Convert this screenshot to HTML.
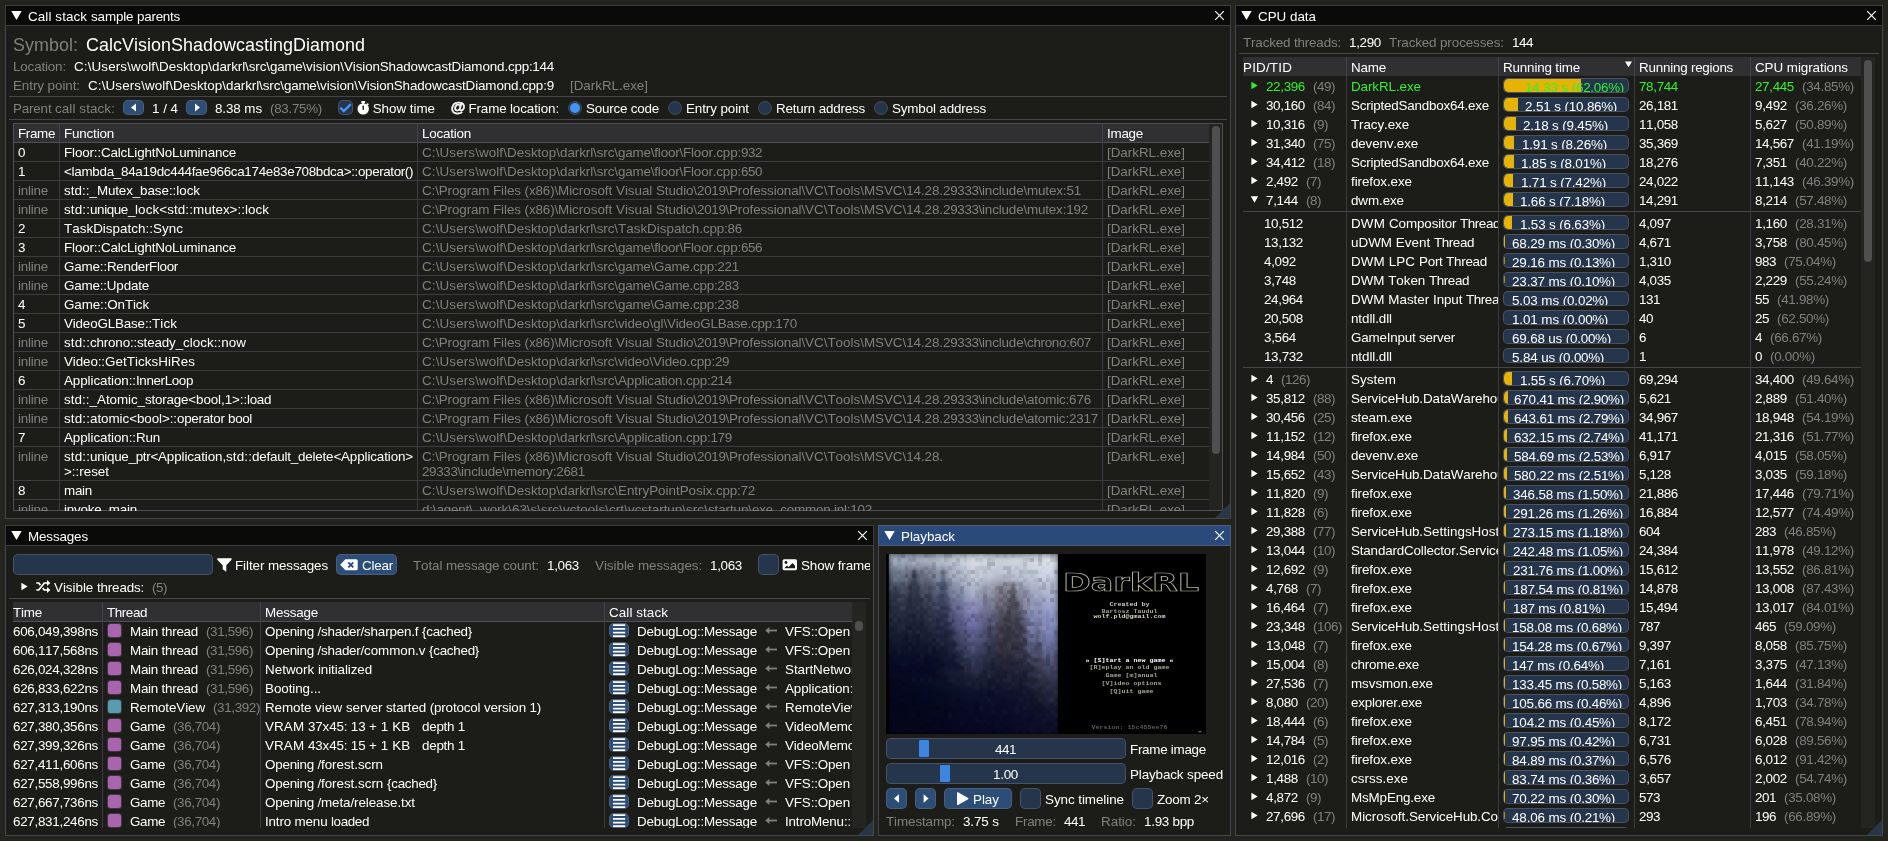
<!DOCTYPE html><html><head><meta charset="utf-8"><title>Tracy Profiler</title><style>
html,body{margin:0;padding:0}
body{width:1888px;height:841px;overflow:hidden;background:#24241f;position:relative;font-family:"Liberation Sans",sans-serif;font-kerning:none;color:#fff;font-size:13.4266px}
#bg,#fg{position:absolute;left:0;top:0;width:1888px;height:841px;overflow:hidden}
#fg{will-change:transform}
.r{position:absolute;display:block}
.c{position:absolute;overflow:hidden}
.t{position:absolute;white-space:pre;line-height:15px;height:15px;font-size:13.4266px;color:#fff}
.B{font-size:17.9021px;line-height:20px;height:20px}
.d{color:#808080}
.g{color:#33f033}
</style></head><body><div id="bg"><div class="r" style="left:5px;top:5px;width:1226px;height:514px;background:#1c1c18;"></div><div class="r" style="left:5px;top:5px;width:1226px;height:21px;background:#0a0a09;"></div><div class="r" style="left:6px;top:25px;width:1224px;height:1px;background:rgba(110,110,128,.5);"></div><svg class="r" style="left:5px;top:5px;" width="1226" height="21" viewBox="0 0 1226 21"><polygon points="6.30,6.00 16.70,6.00 11.50,15.00" fill="#fff"/><path d="M1210.20 6.20L1218.80 14.80M1218.80 6.20L1210.20 14.80" stroke="#fff" stroke-width="1.15" fill="none"/></svg><div class="r" style="left:9px;top:96px;width:1218px;height:1px;background:rgba(110,110,128,.5);"></div><div class="r" style="left:123px;top:100px;width:21px;height:15px;background:#2b4d76;border-radius:5px;box-shadow:inset 0 0 0 1px rgba(110,110,128,.5)"></div><svg class="r" style="left:123px;top:100px;" width="21" height="15" viewBox="0 0 21 15"><polygon points="13,3.5 13,11.5 8,7.5" fill="#fff"/></svg><div class="r" style="left:186px;top:100px;width:21px;height:15px;background:#2b4d76;border-radius:5px;box-shadow:inset 0 0 0 1px rgba(110,110,128,.5)"></div><svg class="r" style="left:186px;top:100px;" width="21" height="15" viewBox="0 0 21 15"><polygon points="9,3.5 9,11.5 14,7.5" fill="#fff"/></svg><div class="r" style="left:338px;top:100px;width:15px;height:15px;background:#24354c;border-radius:5px;box-shadow:inset 0 0 0 1px rgba(110,110,128,.5)"></div><svg class="r" style="left:338px;top:100px;" width="15" height="15" viewBox="0 0 15 15"><path d="M2.3 7.6L5.8 11.1L12.8 4.1" stroke="#4296fa" stroke-width="2.2" fill="none"/></svg><svg class="r" style="left:357px;top:100px;" width="13" height="15" viewBox="0 0 13 15"><circle cx="6.2" cy="8.9" r="5.7" fill="#fff"/><rect x="4.2" y="0.9" width="4" height="2" rx=".6" fill="#fff"/><rect x="5.4" y="2" width="1.7" height="2" fill="#fff"/><rect x="5.5" y="5.6" width="1.5" height="4.2" rx=".6" fill="#1c1c18"/><path d="M10 3.6l1.3 1.3" stroke="#fff" stroke-width="1.6"/></svg><svg class="r" style="left:567px;top:100px;" width="16" height="16" viewBox="0 0 16 16"><circle cx="8" cy="8" r="6.5" fill="#24354c" stroke="rgba(110,110,128,.5)" stroke-width="1"/><circle cx="8" cy="8" r="5" fill="#4296fa"/></svg><svg class="r" style="left:667px;top:100px;" width="16" height="16" viewBox="0 0 16 16"><circle cx="8" cy="8" r="6.5" fill="#24354c" stroke="rgba(110,110,128,.5)" stroke-width="1"/></svg><svg class="r" style="left:757px;top:100px;" width="16" height="16" viewBox="0 0 16 16"><circle cx="8" cy="8" r="6.5" fill="#24354c" stroke="rgba(110,110,128,.5)" stroke-width="1"/></svg><svg class="r" style="left:873px;top:100px;" width="16" height="16" viewBox="0 0 16 16"><circle cx="8" cy="8" r="6.5" fill="#24354c" stroke="rgba(110,110,128,.5)" stroke-width="1"/></svg><div class="r" style="left:9px;top:119px;width:1218px;height:1px;background:rgba(110,110,128,.5);"></div><div class="c" style="left:13px;top:123px;width:1210px;height:388px;"><div class="r" style="left:0px;top:0px;width:1196px;height:19px;background:#303033;"></div><div class="r" style="left:1196px;top:0px;width:14px;height:388px;background:#242420;"></div><div class="r" style="left:1199px;top:3px;width:8px;height:328px;background:#4f4f4f;border-radius:4px"></div><div class="r" style="left:0px;top:19px;width:1196px;height:1px;background:#4f4f59;"></div><div class="r" style="left:0px;top:38px;width:1196px;height:1px;background:#3b3b42;"></div><div class="r" style="left:0px;top:57px;width:1196px;height:1px;background:#3b3b42;"></div><div class="r" style="left:0px;top:76px;width:1196px;height:1px;background:#3b3b42;"></div><div class="r" style="left:0px;top:95px;width:1196px;height:1px;background:#3b3b42;"></div><div class="r" style="left:0px;top:114px;width:1196px;height:1px;background:#3b3b42;"></div><div class="r" style="left:0px;top:133px;width:1196px;height:1px;background:#3b3b42;"></div><div class="r" style="left:0px;top:152px;width:1196px;height:1px;background:#3b3b42;"></div><div class="r" style="left:0px;top:171px;width:1196px;height:1px;background:#3b3b42;"></div><div class="r" style="left:0px;top:190px;width:1196px;height:1px;background:#3b3b42;"></div><div class="r" style="left:0px;top:209px;width:1196px;height:1px;background:#3b3b42;"></div><div class="r" style="left:0px;top:228px;width:1196px;height:1px;background:#3b3b42;"></div><div class="r" style="left:0px;top:247px;width:1196px;height:1px;background:#3b3b42;"></div><div class="r" style="left:0px;top:266px;width:1196px;height:1px;background:#3b3b42;"></div><div class="r" style="left:0px;top:285px;width:1196px;height:1px;background:#3b3b42;"></div><div class="r" style="left:0px;top:304px;width:1196px;height:1px;background:#3b3b42;"></div><div class="r" style="left:0px;top:323px;width:1196px;height:1px;background:#3b3b42;"></div><div class="r" style="left:0px;top:357px;width:1196px;height:1px;background:#3b3b42;"></div><div class="r" style="left:0px;top:376px;width:1196px;height:1px;background:#3b3b42;"></div><div class="r" style="left:46px;top:0px;width:1px;height:19px;background:#43434c;"></div><div class="r" style="left:46px;top:19px;width:1px;height:369px;background:#3b3b42;"></div><div class="r" style="left:404px;top:0px;width:1px;height:19px;background:#43434c;"></div><div class="r" style="left:404px;top:19px;width:1px;height:369px;background:#3b3b42;"></div><div class="r" style="left:1089px;top:0px;width:1px;height:19px;background:#43434c;"></div><div class="r" style="left:1089px;top:19px;width:1px;height:369px;background:#3b3b42;"></div></div><div class="r" style="left:13px;top:123px;width:1210px;height:388px;background:transparent;box-shadow:inset 0 0 0 1px #4f4f59"></div><div class="r" style="left:5px;top:5px;width:1226px;height:514px;background:transparent;box-shadow:inset 0 0 0 1px rgba(110,110,128,.5);pointer-events:none"></div><svg class="r" style="left:1215px;top:503px;" width="15" height="15" viewBox="0 0 15 15"><polygon points="15,0 15,15 0,15" fill="#283646"/></svg><div class="r" style="left:5px;top:525px;width:869px;height:311px;background:#1c1c18;"></div><div class="r" style="left:5px;top:525px;width:869px;height:21px;background:#0a0a09;"></div><div class="r" style="left:6px;top:545px;width:867px;height:1px;background:rgba(110,110,128,.5);"></div><svg class="r" style="left:5px;top:525px;" width="869" height="21" viewBox="0 0 869 21"><polygon points="6.30,6.00 16.70,6.00 11.50,15.00" fill="#fff"/><path d="M853.20 6.20L861.80 14.80M861.80 6.20L853.20 14.80" stroke="#fff" stroke-width="1.15" fill="none"/></svg><div class="c" style="left:6px;top:546px;width:864px;height:289px;"><div class="r" style="left:7px;top:8px;width:200px;height:21px;background:#24354c;border-radius:5px;box-shadow:inset 0 0 0 1px rgba(110,110,128,.5)"></div><svg class="r" style="left:211px;top:11px;" width="15" height="16" viewBox="0 0 15 16"><path d="M0.3 1.2h14.2v1.6l-5.2 5.4v6.6l-3.6-2.6v-4l-5.4-5.4z" fill="#fff"/></svg><div class="r" style="left:330px;top:8px;width:61px;height:21px;background:#2b4d76;border-radius:5px;box-shadow:inset 0 0 0 1px rgba(110,110,128,.5)"></div><svg class="r" style="left:334px;top:13px;" width="19" height="12" viewBox="0 0 19 12"><path d="M5.4 0.3h10.8a1.5 1.5 0 0 1 1.5 1.5v8a1.5 1.5 0 0 1-1.5 1.5h-10.8l-5.2-5.5z" fill="#fff"/><path d="M8.3 3.3l5 5M13.3 3.3l-5 5" stroke="#2b4d76" stroke-width="1.9"/></svg><div class="r" style="left:752px;top:8px;width:21px;height:21px;background:#24354c;border-radius:5px;box-shadow:inset 0 0 0 1px rgba(110,110,128,.5)"></div><svg class="r" style="left:776px;top:13px;" width="16" height="12" viewBox="0 0 16 12"><rect x="0.6" y="0.2" width="14.4" height="11" rx="1.6" fill="#fff"/><circle cx="4" cy="3.5" r="1.45" fill="#1c1c18"/><path d="M2.2 9.3l2.8-2.8 1.6 1.6 3.9-4.1 2.6 2.7v2.6z" fill="#1c1c18"/></svg><svg class="r" style="left:7px;top:33px;" width="60" height="15" viewBox="0 0 60 15"><polygon points="8.35,3.86 8.35,11.14 14.65,7.50" fill="#fff"/><path d="M23.3 11h2.4l5.6-7h3.4M23.3 4h2.4l1.7 2.1M29.7 9.1l1.6 1.9h3.4" stroke="#fff" stroke-width="1.7" fill="none"/><polygon points="34,1 37.4,4 34,7" fill="#fff"/><polygon points="34,8 37.4,11 34,14" fill="#fff"/></svg><div class="r" style="left:3px;top:52px;width:862px;height:1px;background:rgba(110,110,128,.5);"></div><div class="c" style="left:7px;top:56px;width:853px;height:226px;"><div class="r" style="left:0px;top:0px;width:839px;height:19px;background:#303033;"></div><div class="r" style="left:0px;top:19px;width:839px;height:1px;background:#4f4f59;"></div><div class="r" style="left:839px;top:0px;width:14px;height:226px;background:#242420;"></div><div class="r" style="left:842px;top:19px;width:8px;height:10px;background:#4f4f4f;border-radius:4px"></div><div class="c" style="left:90px;top:19px;width:157px;height:19px;"><div class="r" style="left:4px;top:2px;width:15px;height:15px;background:#a865ad;border-radius:3.5px;opacity:.3"></div><div class="r" style="left:5px;top:3px;width:13px;height:13px;background:#a865ad;border-radius:2.5px"></div></div><div class="c" style="left:592px;top:19px;width:247px;height:19px;"><div class="r" style="left:4px;top:2px;width:20px;height:15px;background:#2b4d76;border-radius:5px;box-shadow:inset 0 0 0 1px rgba(110,110,128,.5)"></div><svg class="r" style="left:4px;top:2px;" width="20" height="15" viewBox="0 0 20 15"><path d="M4 2.15h12.2M4 5.9h12.2M4 9.6h12.2M4 13.1h12.2" stroke="#fff" stroke-width="1.9"/></svg><svg class="r" style="left:159px;top:2px;" width="15" height="15" viewBox="0 0 15 15"><path d="M13 7.5h-9" stroke="#808080" stroke-width="1.8"/><polygon points="1.2,7.5 5.4,4 5.4,11" fill="#808080"/></svg></div><div class="c" style="left:90px;top:38px;width:157px;height:19px;"><div class="r" style="left:4px;top:2px;width:15px;height:15px;background:#a865ad;border-radius:3.5px;opacity:.3"></div><div class="r" style="left:5px;top:3px;width:13px;height:13px;background:#a865ad;border-radius:2.5px"></div></div><div class="c" style="left:592px;top:38px;width:247px;height:19px;"><div class="r" style="left:4px;top:2px;width:20px;height:15px;background:#2b4d76;border-radius:5px;box-shadow:inset 0 0 0 1px rgba(110,110,128,.5)"></div><svg class="r" style="left:4px;top:2px;" width="20" height="15" viewBox="0 0 20 15"><path d="M4 2.15h12.2M4 5.9h12.2M4 9.6h12.2M4 13.1h12.2" stroke="#fff" stroke-width="1.9"/></svg><svg class="r" style="left:159px;top:2px;" width="15" height="15" viewBox="0 0 15 15"><path d="M13 7.5h-9" stroke="#808080" stroke-width="1.8"/><polygon points="1.2,7.5 5.4,4 5.4,11" fill="#808080"/></svg></div><div class="c" style="left:90px;top:57px;width:157px;height:19px;"><div class="r" style="left:4px;top:2px;width:15px;height:15px;background:#a865ad;border-radius:3.5px;opacity:.3"></div><div class="r" style="left:5px;top:3px;width:13px;height:13px;background:#a865ad;border-radius:2.5px"></div></div><div class="c" style="left:592px;top:57px;width:247px;height:19px;"><div class="r" style="left:4px;top:2px;width:20px;height:15px;background:#2b4d76;border-radius:5px;box-shadow:inset 0 0 0 1px rgba(110,110,128,.5)"></div><svg class="r" style="left:4px;top:2px;" width="20" height="15" viewBox="0 0 20 15"><path d="M4 2.15h12.2M4 5.9h12.2M4 9.6h12.2M4 13.1h12.2" stroke="#fff" stroke-width="1.9"/></svg><svg class="r" style="left:159px;top:2px;" width="15" height="15" viewBox="0 0 15 15"><path d="M13 7.5h-9" stroke="#808080" stroke-width="1.8"/><polygon points="1.2,7.5 5.4,4 5.4,11" fill="#808080"/></svg></div><div class="c" style="left:90px;top:76px;width:157px;height:19px;"><div class="r" style="left:4px;top:2px;width:15px;height:15px;background:#a865ad;border-radius:3.5px;opacity:.3"></div><div class="r" style="left:5px;top:3px;width:13px;height:13px;background:#a865ad;border-radius:2.5px"></div></div><div class="c" style="left:592px;top:76px;width:247px;height:19px;"><div class="r" style="left:4px;top:2px;width:20px;height:15px;background:#2b4d76;border-radius:5px;box-shadow:inset 0 0 0 1px rgba(110,110,128,.5)"></div><svg class="r" style="left:4px;top:2px;" width="20" height="15" viewBox="0 0 20 15"><path d="M4 2.15h12.2M4 5.9h12.2M4 9.6h12.2M4 13.1h12.2" stroke="#fff" stroke-width="1.9"/></svg><svg class="r" style="left:159px;top:2px;" width="15" height="15" viewBox="0 0 15 15"><path d="M13 7.5h-9" stroke="#808080" stroke-width="1.8"/><polygon points="1.2,7.5 5.4,4 5.4,11" fill="#808080"/></svg></div><div class="c" style="left:90px;top:95px;width:157px;height:19px;"><div class="r" style="left:4px;top:2px;width:15px;height:15px;background:#5a9bb0;border-radius:3.5px;opacity:.3"></div><div class="r" style="left:5px;top:3px;width:13px;height:13px;background:#5a9bb0;border-radius:2.5px"></div></div><div class="c" style="left:592px;top:95px;width:247px;height:19px;"><div class="r" style="left:4px;top:2px;width:20px;height:15px;background:#2b4d76;border-radius:5px;box-shadow:inset 0 0 0 1px rgba(110,110,128,.5)"></div><svg class="r" style="left:4px;top:2px;" width="20" height="15" viewBox="0 0 20 15"><path d="M4 2.15h12.2M4 5.9h12.2M4 9.6h12.2M4 13.1h12.2" stroke="#fff" stroke-width="1.9"/></svg><svg class="r" style="left:159px;top:2px;" width="15" height="15" viewBox="0 0 15 15"><path d="M13 7.5h-9" stroke="#808080" stroke-width="1.8"/><polygon points="1.2,7.5 5.4,4 5.4,11" fill="#808080"/></svg></div><div class="c" style="left:90px;top:114px;width:157px;height:19px;"><div class="r" style="left:4px;top:2px;width:15px;height:15px;background:#a865ad;border-radius:3.5px;opacity:.3"></div><div class="r" style="left:5px;top:3px;width:13px;height:13px;background:#a865ad;border-radius:2.5px"></div></div><div class="c" style="left:592px;top:114px;width:247px;height:19px;"><div class="r" style="left:4px;top:2px;width:20px;height:15px;background:#2b4d76;border-radius:5px;box-shadow:inset 0 0 0 1px rgba(110,110,128,.5)"></div><svg class="r" style="left:4px;top:2px;" width="20" height="15" viewBox="0 0 20 15"><path d="M4 2.15h12.2M4 5.9h12.2M4 9.6h12.2M4 13.1h12.2" stroke="#fff" stroke-width="1.9"/></svg><svg class="r" style="left:159px;top:2px;" width="15" height="15" viewBox="0 0 15 15"><path d="M13 7.5h-9" stroke="#808080" stroke-width="1.8"/><polygon points="1.2,7.5 5.4,4 5.4,11" fill="#808080"/></svg></div><div class="c" style="left:90px;top:133px;width:157px;height:19px;"><div class="r" style="left:4px;top:2px;width:15px;height:15px;background:#a865ad;border-radius:3.5px;opacity:.3"></div><div class="r" style="left:5px;top:3px;width:13px;height:13px;background:#a865ad;border-radius:2.5px"></div></div><div class="c" style="left:592px;top:133px;width:247px;height:19px;"><div class="r" style="left:4px;top:2px;width:20px;height:15px;background:#2b4d76;border-radius:5px;box-shadow:inset 0 0 0 1px rgba(110,110,128,.5)"></div><svg class="r" style="left:4px;top:2px;" width="20" height="15" viewBox="0 0 20 15"><path d="M4 2.15h12.2M4 5.9h12.2M4 9.6h12.2M4 13.1h12.2" stroke="#fff" stroke-width="1.9"/></svg><svg class="r" style="left:159px;top:2px;" width="15" height="15" viewBox="0 0 15 15"><path d="M13 7.5h-9" stroke="#808080" stroke-width="1.8"/><polygon points="1.2,7.5 5.4,4 5.4,11" fill="#808080"/></svg></div><div class="c" style="left:90px;top:152px;width:157px;height:19px;"><div class="r" style="left:4px;top:2px;width:15px;height:15px;background:#a865ad;border-radius:3.5px;opacity:.3"></div><div class="r" style="left:5px;top:3px;width:13px;height:13px;background:#a865ad;border-radius:2.5px"></div></div><div class="c" style="left:592px;top:152px;width:247px;height:19px;"><div class="r" style="left:4px;top:2px;width:20px;height:15px;background:#2b4d76;border-radius:5px;box-shadow:inset 0 0 0 1px rgba(110,110,128,.5)"></div><svg class="r" style="left:4px;top:2px;" width="20" height="15" viewBox="0 0 20 15"><path d="M4 2.15h12.2M4 5.9h12.2M4 9.6h12.2M4 13.1h12.2" stroke="#fff" stroke-width="1.9"/></svg><svg class="r" style="left:159px;top:2px;" width="15" height="15" viewBox="0 0 15 15"><path d="M13 7.5h-9" stroke="#808080" stroke-width="1.8"/><polygon points="1.2,7.5 5.4,4 5.4,11" fill="#808080"/></svg></div><div class="c" style="left:90px;top:171px;width:157px;height:19px;"><div class="r" style="left:4px;top:2px;width:15px;height:15px;background:#a865ad;border-radius:3.5px;opacity:.3"></div><div class="r" style="left:5px;top:3px;width:13px;height:13px;background:#a865ad;border-radius:2.5px"></div></div><div class="c" style="left:592px;top:171px;width:247px;height:19px;"><div class="r" style="left:4px;top:2px;width:20px;height:15px;background:#2b4d76;border-radius:5px;box-shadow:inset 0 0 0 1px rgba(110,110,128,.5)"></div><svg class="r" style="left:4px;top:2px;" width="20" height="15" viewBox="0 0 20 15"><path d="M4 2.15h12.2M4 5.9h12.2M4 9.6h12.2M4 13.1h12.2" stroke="#fff" stroke-width="1.9"/></svg><svg class="r" style="left:159px;top:2px;" width="15" height="15" viewBox="0 0 15 15"><path d="M13 7.5h-9" stroke="#808080" stroke-width="1.8"/><polygon points="1.2,7.5 5.4,4 5.4,11" fill="#808080"/></svg></div><div class="c" style="left:90px;top:190px;width:157px;height:19px;"><div class="r" style="left:4px;top:2px;width:15px;height:15px;background:#a865ad;border-radius:3.5px;opacity:.3"></div><div class="r" style="left:5px;top:3px;width:13px;height:13px;background:#a865ad;border-radius:2.5px"></div></div><div class="c" style="left:592px;top:190px;width:247px;height:19px;"><div class="r" style="left:4px;top:2px;width:20px;height:15px;background:#2b4d76;border-radius:5px;box-shadow:inset 0 0 0 1px rgba(110,110,128,.5)"></div><svg class="r" style="left:4px;top:2px;" width="20" height="15" viewBox="0 0 20 15"><path d="M4 2.15h12.2M4 5.9h12.2M4 9.6h12.2M4 13.1h12.2" stroke="#fff" stroke-width="1.9"/></svg><svg class="r" style="left:159px;top:2px;" width="15" height="15" viewBox="0 0 15 15"><path d="M13 7.5h-9" stroke="#808080" stroke-width="1.8"/><polygon points="1.2,7.5 5.4,4 5.4,11" fill="#808080"/></svg></div><div class="c" style="left:90px;top:209px;width:157px;height:19px;"><div class="r" style="left:4px;top:2px;width:15px;height:15px;background:#a865ad;border-radius:3.5px;opacity:.3"></div><div class="r" style="left:5px;top:3px;width:13px;height:13px;background:#a865ad;border-radius:2.5px"></div></div><div class="c" style="left:592px;top:209px;width:246px;height:19px;"><div class="r" style="left:4px;top:2px;width:20px;height:15px;background:#2b4d76;border-radius:5px;box-shadow:inset 0 0 0 1px rgba(110,110,128,.5)"></div><svg class="r" style="left:4px;top:2px;" width="20" height="15" viewBox="0 0 20 15"><path d="M4 2.15h12.2M4 5.9h12.2M4 9.6h12.2M4 13.1h12.2" stroke="#fff" stroke-width="1.9"/></svg><svg class="r" style="left:159px;top:2px;" width="15" height="15" viewBox="0 0 15 15"><path d="M13 7.5h-9" stroke="#808080" stroke-width="1.8"/><polygon points="1.2,7.5 5.4,4 5.4,11" fill="#808080"/></svg></div><div class="r" style="left:89px;top:0px;width:1px;height:19px;background:#43434c;"></div><div class="r" style="left:89px;top:19px;width:1px;height:207px;background:#3b3b42;"></div><div class="r" style="left:247px;top:0px;width:1px;height:19px;background:#43434c;"></div><div class="r" style="left:247px;top:19px;width:1px;height:207px;background:#3b3b42;"></div><div class="r" style="left:591px;top:0px;width:1px;height:19px;background:#43434c;"></div><div class="r" style="left:591px;top:19px;width:1px;height:207px;background:#3b3b42;"></div></div></div><div class="r" style="left:5px;top:525px;width:869px;height:311px;background:transparent;box-shadow:inset 0 0 0 1px rgba(110,110,128,.5);pointer-events:none"></div><svg class="r" style="left:858px;top:820px;" width="15" height="15" viewBox="0 0 15 15"><polygon points="15,0 15,15 0,15" fill="#283646"/></svg><div class="r" style="left:878px;top:525px;width:353px;height:311px;background:#1c1c18;"></div><div class="r" style="left:878px;top:525px;width:353px;height:21px;background:#294a7a;"></div><div class="r" style="left:879px;top:545px;width:351px;height:1px;background:rgba(110,110,128,.5);"></div><svg class="r" style="left:878px;top:525px;" width="353" height="21" viewBox="0 0 353 21"><polygon points="6.30,6.00 16.70,6.00 11.50,15.00" fill="#fff"/><path d="M337.20 6.20L345.80 14.80M345.80 6.20L337.20 14.80" stroke="#fff" stroke-width="1.15" fill="none"/></svg><div class="c" style="left:886px;top:554px;width:320px;height:180px;background:#000"><svg class="r" style="left:0px;top:0px;" width="320" height="180" viewBox="0 0 320 180"><g transform="translate(2.8,0) scale(0.9837,1)"><defs><filter id="fb" x="-10%" y="-10%" width="120%" height="120%" color-interpolation-filters="sRGB"><feGaussianBlur stdDeviation="4"/></filter><filter id="fs" x="-30%" y="-30%" width="160%" height="160%" color-interpolation-filters="sRGB"><feGaussianBlur stdDeviation="1.1"/></filter><linearGradient id="tga" x1="0" y1="0" x2="0" y2="1"><stop offset="0" stop-color="#2c3444"/><stop offset=".5" stop-color="#182034"/><stop offset=".85" stop-color="#070a24"/></linearGradient><linearGradient id="tgb" x1="0" y1="0" x2="0" y2="1"><stop offset="0" stop-color="#38415a"/><stop offset=".5" stop-color="#1c243c"/><stop offset=".85" stop-color="#070a24"/></linearGradient><linearGradient id="tgc" x1="0" y1="0" x2="0" y2="1"><stop offset="0" stop-color="#3e3a42"/><stop offset=".45" stop-color="#2e2c38"/><stop offset=".8" stop-color="#0c0e28"/></linearGradient><clipPath id="fc"><rect x="0" y="0" width="172" height="180"/></clipPath></defs><g clip-path="url(#fc)"><g filter="url(#fb)"><rect x="-1.0" y="-1.5" width="17.7" height="18" fill="#a2adc1"/><rect x="14.6" y="-1.5" width="17.7" height="18" fill="#a2acbf"/><rect x="30.3" y="-1.5" width="17.7" height="18" fill="#a6afc0"/><rect x="45.9" y="-1.5" width="17.7" height="18" fill="#b3bccc"/><rect x="61.6" y="-1.5" width="17.7" height="18" fill="#c2cad6"/><rect x="77.2" y="-1.5" width="17.7" height="18" fill="#d2d8e1"/><rect x="92.8" y="-1.5" width="17.7" height="18" fill="#ced5df"/><rect x="108.5" y="-1.5" width="17.7" height="18" fill="#cbd2de"/><rect x="124.1" y="-1.5" width="17.7" height="18" fill="#ced5e0"/><rect x="139.8" y="-1.5" width="17.7" height="18" fill="#d3dae3"/><rect x="155.4" y="-1.5" width="17.7" height="18" fill="#dbe2eb"/><rect x="-1.0" y="13.5" width="17.7" height="18" fill="#6b7589"/><rect x="14.6" y="13.5" width="17.7" height="18" fill="#636a7d"/><rect x="30.3" y="13.5" width="17.7" height="18" fill="#676d7f"/><rect x="45.9" y="13.5" width="17.7" height="18" fill="#8790a6"/><rect x="61.6" y="13.5" width="17.7" height="18" fill="#a7b0c3"/><rect x="77.2" y="13.5" width="17.7" height="18" fill="#c6ceda"/><rect x="92.8" y="13.5" width="17.7" height="18" fill="#bec5d4"/><rect x="108.5" y="13.5" width="17.7" height="18" fill="#b6bdce"/><rect x="124.1" y="13.5" width="17.7" height="18" fill="#bbc2d3"/><rect x="139.8" y="13.5" width="17.7" height="18" fill="#c3cbdb"/><rect x="155.4" y="13.5" width="17.7" height="18" fill="#cbd3e4"/><rect x="-1.0" y="28.5" width="17.7" height="18" fill="#434b5e"/><rect x="14.6" y="28.5" width="17.7" height="18" fill="#414858"/><rect x="30.3" y="28.5" width="17.7" height="18" fill="#464d5e"/><rect x="45.9" y="28.5" width="17.7" height="18" fill="#5d6580"/><rect x="61.6" y="28.5" width="17.7" height="18" fill="#8089a4"/><rect x="77.2" y="28.5" width="17.7" height="18" fill="#a9b2c8"/><rect x="92.8" y="28.5" width="17.7" height="18" fill="#9297a9"/><rect x="108.5" y="28.5" width="17.7" height="18" fill="#7b7b8a"/><rect x="124.1" y="28.5" width="17.7" height="18" fill="#8a8c9f"/><rect x="139.8" y="28.5" width="17.7" height="18" fill="#a2a8c0"/><rect x="155.4" y="28.5" width="17.7" height="18" fill="#b0b8d3"/><rect x="-1.0" y="43.5" width="17.7" height="18" fill="#313a4b"/><rect x="14.6" y="43.5" width="17.7" height="18" fill="#313948"/><rect x="30.3" y="43.5" width="17.7" height="18" fill="#373e4f"/><rect x="45.9" y="43.5" width="17.7" height="18" fill="#4a516f"/><rect x="61.6" y="43.5" width="17.7" height="18" fill="#686d93"/><rect x="77.2" y="43.5" width="17.7" height="18" fill="#8b8eb9"/><rect x="92.8" y="43.5" width="17.7" height="18" fill="#747491"/><rect x="108.5" y="43.5" width="17.7" height="18" fill="#5d5b69"/><rect x="124.1" y="43.5" width="17.7" height="18" fill="#707186"/><rect x="139.8" y="43.5" width="17.7" height="18" fill="#8d92b5"/><rect x="155.4" y="43.5" width="17.7" height="18" fill="#9ca4cc"/><rect x="-1.0" y="58.5" width="17.7" height="18" fill="#232d3d"/><rect x="14.6" y="58.5" width="17.7" height="18" fill="#252e3c"/><rect x="30.3" y="58.5" width="17.7" height="18" fill="#2b3344"/><rect x="45.9" y="58.5" width="17.7" height="18" fill="#3b415f"/><rect x="61.6" y="58.5" width="17.7" height="18" fill="#535681"/><rect x="77.2" y="58.5" width="17.7" height="18" fill="#6f6ea7"/><rect x="92.8" y="58.5" width="17.7" height="18" fill="#5b5a7d"/><rect x="108.5" y="58.5" width="17.7" height="18" fill="#484554"/><rect x="124.1" y="58.5" width="17.7" height="18" fill="#5c5d75"/><rect x="139.8" y="58.5" width="17.7" height="18" fill="#7a80a9"/><rect x="155.4" y="58.5" width="17.7" height="18" fill="#8a91c2"/><rect x="-1.0" y="73.5" width="17.7" height="18" fill="#151c31"/><rect x="14.6" y="73.5" width="17.7" height="18" fill="#192133"/><rect x="30.3" y="73.5" width="17.7" height="18" fill="#20283a"/><rect x="45.9" y="73.5" width="17.7" height="18" fill="#2b324a"/><rect x="61.6" y="73.5" width="17.7" height="18" fill="#3f4567"/><rect x="77.2" y="73.5" width="17.7" height="18" fill="#595c8a"/><rect x="92.8" y="73.5" width="17.7" height="18" fill="#4a4c6a"/><rect x="108.5" y="73.5" width="17.7" height="18" fill="#3c3b4a"/><rect x="124.1" y="73.5" width="17.7" height="18" fill="#4f5069"/><rect x="139.8" y="73.5" width="17.7" height="18" fill="#6a6f97"/><rect x="155.4" y="73.5" width="17.7" height="18" fill="#777eae"/><rect x="-1.0" y="88.5" width="17.7" height="18" fill="#0c1129"/><rect x="14.6" y="88.5" width="17.7" height="18" fill="#10172c"/><rect x="30.3" y="88.5" width="17.7" height="18" fill="#161d31"/><rect x="45.9" y="88.5" width="17.7" height="18" fill="#1e253a"/><rect x="61.6" y="88.5" width="17.7" height="18" fill="#2d344f"/><rect x="77.2" y="88.5" width="17.7" height="18" fill="#41476a"/><rect x="92.8" y="88.5" width="17.7" height="18" fill="#393c56"/><rect x="108.5" y="88.5" width="17.7" height="18" fill="#303141"/><rect x="124.1" y="88.5" width="17.7" height="18" fill="#40425a"/><rect x="139.8" y="88.5" width="17.7" height="18" fill="#565b7f"/><rect x="155.4" y="88.5" width="17.7" height="18" fill="#616791"/><rect x="-1.0" y="103.5" width="17.7" height="18" fill="#080c25"/><rect x="14.6" y="103.5" width="17.7" height="18" fill="#0a1026"/><rect x="30.3" y="103.5" width="17.7" height="18" fill="#0e1429"/><rect x="45.9" y="103.5" width="17.7" height="18" fill="#141b2f"/><rect x="61.6" y="103.5" width="17.7" height="18" fill="#1e243a"/><rect x="77.2" y="103.5" width="17.7" height="18" fill="#292f48"/><rect x="92.8" y="103.5" width="17.7" height="18" fill="#272b40"/><rect x="108.5" y="103.5" width="17.7" height="18" fill="#252739"/><rect x="124.1" y="103.5" width="17.7" height="18" fill="#303349"/><rect x="139.8" y="103.5" width="17.7" height="18" fill="#3f4360"/><rect x="155.4" y="103.5" width="17.7" height="18" fill="#474b6b"/><rect x="-1.0" y="118.5" width="17.7" height="18" fill="#050921"/><rect x="14.6" y="118.5" width="17.7" height="18" fill="#070b22"/><rect x="30.3" y="118.5" width="17.7" height="18" fill="#090e24"/><rect x="45.9" y="118.5" width="17.7" height="18" fill="#0d1228"/><rect x="61.6" y="118.5" width="17.7" height="18" fill="#12182e"/><rect x="77.2" y="118.5" width="17.7" height="18" fill="#191e35"/><rect x="92.8" y="118.5" width="17.7" height="18" fill="#1a1e34"/><rect x="108.5" y="118.5" width="17.7" height="18" fill="#1b1e33"/><rect x="124.1" y="118.5" width="17.7" height="18" fill="#24273e"/><rect x="139.8" y="118.5" width="17.7" height="18" fill="#2e324b"/><rect x="155.4" y="118.5" width="17.7" height="18" fill="#343752"/><rect x="-1.0" y="133.5" width="17.7" height="18" fill="#04071e"/><rect x="14.6" y="133.5" width="17.7" height="18" fill="#04081f"/><rect x="30.3" y="133.5" width="17.7" height="18" fill="#050920"/><rect x="45.9" y="133.5" width="17.7" height="18" fill="#070b22"/><rect x="61.6" y="133.5" width="17.7" height="18" fill="#090d26"/><rect x="77.2" y="133.5" width="17.7" height="18" fill="#0c102a"/><rect x="92.8" y="133.5" width="17.7" height="18" fill="#0e122c"/><rect x="108.5" y="133.5" width="17.7" height="18" fill="#11152e"/><rect x="124.1" y="133.5" width="17.7" height="18" fill="#181b34"/><rect x="139.8" y="133.5" width="17.7" height="18" fill="#20233b"/><rect x="155.4" y="133.5" width="17.7" height="18" fill="#24273f"/><rect x="-1.0" y="148.5" width="17.7" height="18" fill="#04061d"/><rect x="14.6" y="148.5" width="17.7" height="18" fill="#04071d"/><rect x="30.3" y="148.5" width="17.7" height="18" fill="#04081e"/><rect x="45.9" y="148.5" width="17.7" height="18" fill="#050920"/><rect x="61.6" y="148.5" width="17.7" height="18" fill="#070a23"/><rect x="77.2" y="148.5" width="17.7" height="18" fill="#090c26"/><rect x="92.8" y="148.5" width="17.7" height="18" fill="#0a0e28"/><rect x="108.5" y="148.5" width="17.7" height="18" fill="#0c102a"/><rect x="124.1" y="148.5" width="17.7" height="18" fill="#11142e"/><rect x="139.8" y="148.5" width="17.7" height="18" fill="#161932"/><rect x="155.4" y="148.5" width="17.7" height="18" fill="#181b35"/><rect x="-1.0" y="163.5" width="17.7" height="18" fill="#04061c"/><rect x="14.6" y="163.5" width="17.7" height="18" fill="#04061c"/><rect x="30.3" y="163.5" width="17.7" height="18" fill="#04071d"/><rect x="45.9" y="163.5" width="17.7" height="18" fill="#04071e"/><rect x="61.6" y="163.5" width="17.7" height="18" fill="#050820"/><rect x="77.2" y="163.5" width="17.7" height="18" fill="#070924"/><rect x="92.8" y="163.5" width="17.7" height="18" fill="#070a25"/><rect x="108.5" y="163.5" width="17.7" height="18" fill="#080b26"/><rect x="124.1" y="163.5" width="17.7" height="18" fill="#0a0d28"/><rect x="139.8" y="163.5" width="17.7" height="18" fill="#0d102b"/><rect x="155.4" y="163.5" width="17.7" height="18" fill="#0e112d"/></g><g filter="url(#fs)"><polygon points="26.0,12.0 29.3,22.8 27.8,25.2 32.7,34.8 29.7,37.2 36.0,46.8 31.5,49.2 39.3,58.8 33.3,61.2 42.7,70.8 35.2,73.2 46.0,82.8 37.0,85.2 49.3,94.8 38.8,97.2 52.7,106.8 40.7,109.2 56.0,118.8 42.5,121.2 44.0,120.0 8.0,120.0 9.5,121.2 -4.0,118.8 11.3,109.2 -0.7,106.8 13.2,97.2 2.7,94.8 15.0,85.2 6.0,82.8 16.8,73.2 9.3,70.8 18.7,61.2 12.7,58.8 20.5,49.2 16.0,46.8 22.3,37.2 19.3,34.8 24.2,25.2 22.7,22.8" fill="url(#tga)" opacity="0.62"/><polygon points="55.0,12.0 57.4,22.4 56.3,24.7 59.9,34.0 57.7,36.3 62.3,45.5 59.0,47.8 64.8,57.1 60.4,59.4 67.2,68.6 61.7,70.9 69.7,80.2 63.1,82.5 72.1,91.7 64.4,94.0 74.6,103.3 65.8,105.6 77.0,114.8 67.1,117.2 68.2,116.0 41.8,116.0 42.9,117.2 33.0,114.8 44.2,105.6 35.4,103.3 45.6,94.0 37.9,91.7 46.9,82.5 40.3,80.2 48.3,70.9 42.8,68.6 49.6,59.4 45.2,57.1 51.0,47.8 47.7,45.5 52.3,36.3 50.1,34.0 53.7,24.7 52.6,22.4" fill="url(#tgb)" opacity="0.5"/><polygon points="7.0,30.0 10.2,40.7 8.8,43.1 13.5,52.6 10.6,54.9 16.8,64.4 12.4,66.8 20.0,76.3 14.2,78.7 23.2,88.2 15.9,90.6 26.5,100.1 17.7,102.4 29.8,111.9 19.5,114.3 33.0,123.8 21.3,126.2 22.6,125.0 -8.6,125.0 -7.3,126.2 -19.0,123.8 -5.5,114.3 -15.8,111.9 -3.7,102.4 -12.5,100.1 -1.9,90.6 -9.2,88.2 -0.2,78.7 -6.0,76.3 1.6,66.8 -2.8,64.4 3.4,54.9 0.5,52.6 5.2,43.1 3.8,40.7" fill="url(#tga)" opacity="0.6"/><polygon points="41.0,36.0 43.9,47.6 42.6,50.1 46.7,60.4 44.1,63.0 49.6,73.3 45.7,75.9 52.4,86.1 47.3,88.7 55.3,99.0 48.9,101.6 58.1,111.9 50.4,114.4 61.0,124.7 52.0,127.3 53.0,126.0 29.0,126.0 30.0,127.3 21.0,124.7 31.6,114.4 23.9,111.9 33.1,101.6 26.7,99.0 34.7,88.7 29.6,86.1 36.3,75.9 32.4,73.3 37.9,63.0 35.3,60.4 39.4,50.1 38.1,47.6" fill="url(#tga)" opacity="0.45"/><polygon points="126.5,27.0 130.1,38.7 128.5,41.3 133.8,51.7 130.5,54.3 137.4,64.7 132.5,67.3 141.0,77.7 134.5,80.3 144.7,90.7 136.5,93.3 148.3,103.7 138.5,106.3 152.0,116.7 140.5,119.3 155.6,129.7 142.5,132.3 159.2,142.7 144.5,145.3 162.9,155.7 146.5,158.3 166.5,168.7 148.5,171.3 150.5,170.0 102.5,170.0 104.5,171.3 86.5,168.7 106.5,158.3 90.1,155.7 108.5,145.3 93.8,142.7 110.5,132.3 97.4,129.7 112.5,119.3 101.0,116.7 114.5,106.3 104.7,103.7 116.5,93.3 108.3,90.7 118.5,80.3 112.0,77.7 120.5,67.3 115.6,64.7 122.5,54.3 119.2,51.7 124.5,41.3 122.9,38.7" fill="url(#tgc)" opacity="0.62"/><polygon points="104.0,62.0 107.1,75.9 105.7,79.0 110.3,91.3 107.5,94.4 113.4,106.7 109.2,109.8 116.6,122.2 110.9,125.3 119.7,137.6 112.6,140.7 122.9,153.0 114.4,156.1 126.0,168.5 116.1,171.5 117.2,170.0 90.8,170.0 91.9,171.5 82.0,168.5 93.6,156.1 85.1,153.0 95.4,140.7 88.3,137.6 97.1,125.3 91.4,122.2 98.8,109.8 94.6,106.7 100.5,94.4 97.7,91.3 102.3,79.0 100.9,75.9" fill="url(#tga)" opacity="0.4"/><polygon points="152.0,70.0 154.9,83.5 153.6,86.5 157.7,98.5 155.1,101.5 160.6,113.5 156.7,116.5 163.4,128.5 158.3,131.5 166.3,143.5 159.9,146.5 169.1,158.5 161.4,161.5 172.0,173.5 163.0,176.5 164.0,175.0 140.0,175.0 141.0,176.5 132.0,173.5 142.6,161.5 134.9,158.5 144.1,146.5 137.7,143.5 145.7,131.5 140.6,128.5 147.3,116.5 143.4,113.5 148.9,101.5 146.3,98.5 150.4,86.5 149.1,83.5" fill="url(#tgc)" opacity="0.35"/></g><g stroke-width="4" fill="none" shape-rendering="crispEdges"><path stroke="#fff" stroke-opacity="0.02" d="M28 2h8M144 2h4M40 6h8M64 6h4M108 6h8M120 6h4M36 10h4M52 10h4M120 10h4M140 10h4M0 14h4M52 14h4M68 14h8M80 14h4M108 14h8M16 18h4M108 18h4M8 22h4M20 22h4M36 22h4M48 22h4M72 22h4M128 22h4M8 26h4M40 26h4M52 26h4M68 26h4M88 26h4M108 26h8M28 30h4M104 30h4M168 30h4M24 34h4M60 34h4M116 34h12M140 34h4M24 38h4M32 38h4M44 38h8M56 38h4M68 38h4M152 38h4M24 42h4M56 42h4M76 42h4M92 42h4M128 42h8M160 42h8M36 46h4M48 46h4M68 46h4M80 46h4M88 46h4M4 50h4M24 50h4M52 50h8M132 50h4M144 50h4M156 50h4M44 54h4M64 54h4M88 54h4M96 54h8M140 54h4M160 54h4M20 58h8M40 58h4M56 58h8M104 58h4M116 58h4M0 62h4M8 62h4M28 62h4M68 62h8M80 62h4M100 62h4M108 62h4M116 62h4M128 62h4M152 62h4M168 62h4M4 66h4M20 66h4M36 66h4M56 66h4M72 66h8M124 66h4M156 66h4M0 70h4M12 70h4M36 70h4M44 70h4M52 70h4M64 70h8M100 70h4M164 70h4M8 74h4M60 74h4M76 74h12M116 74h4M124 74h4M8 78h4M44 78h8M68 78h4M108 78h4M128 78h4M148 78h4M20 82h4M32 82h4M72 82h4M84 82h4M164 82h4M20 86h4M60 86h4M72 86h4M84 86h8M104 86h4M112 86h4M124 86h4M140 86h8M160 86h4M24 90h4M44 90h4M68 90h12M20 94h4M40 94h4M48 94h4M60 94h4M72 94h4M108 94h4M116 94h4M136 94h8M8 98h4M40 98h4M60 98h8M96 98h4M112 98h16M152 98h4M32 102h4M60 102h4M68 102h4M104 102h4M116 102h4M152 102h4M28 106h4M56 106h4M92 106h4M100 106h4M140 106h4M12 110h8M72 110h4M136 110h4M148 110h8M164 110h4M56 114h4M76 114h4M84 114h12M116 114h4M48 118h4M76 118h4M84 118h4M92 118h4M100 118h4M128 118h4M88 122h4M120 122h4M140 122h4M24 126h4M32 126h4M40 126h4M60 126h8M108 126h4M168 126h4M68 130h4M80 130h4M96 130h4M124 130h4M136 130h8M148 130h8M88 134h4M104 134h4M116 134h8M108 138h4M136 138h4M156 138h4M148 142h8M168 142h4M100 146h4M132 146h4M152 146h4M104 150h4M140 150h4M168 150h4M92 154h4M128 154h4M136 154h4M104 158h4M116 158h4M128 158h4M164 158h4M60 162h4M168 162h4M88 166h4M156 166h4M72 170h4M168 170h4"/><path stroke="#fff" stroke-opacity="0.04" d="M48 2h8M64 2h4M88 2h4M96 2h4M104 2h4M28 6h8M116 6h4M132 6h4M148 6h4M156 6h4M4 10h4M40 10h4M56 10h4M72 10h4M108 10h4M116 10h4M128 10h4M12 14h4M28 14h4M48 14h4M84 14h4M104 14h4M140 14h4M160 14h4M168 14h4M12 18h4M52 22h4M60 22h4M68 22h4M12 26h4M32 26h4M44 26h8M100 26h4M140 26h4M16 30h4M32 30h4M92 30h4M100 30h4M108 30h4M160 30h4M0 34h4M32 34h4M48 34h4M64 34h8M12 38h4M36 38h4M52 38h4M76 38h4M84 38h4M124 38h4M144 38h4M160 38h4M32 42h4M60 42h4M100 42h4M112 42h4M8 46h4M56 46h4M92 46h4M108 46h4M116 46h4M128 46h4M160 46h4M168 46h4M40 50h4M100 50h4M164 50h4M12 54h4M28 54h4M76 54h4M84 54h4M92 54h4M116 54h4M148 54h4M68 58h12M88 58h4M96 58h8M108 58h4M128 58h4M148 58h4M164 58h4M60 62h4M96 62h4M124 62h4M132 62h4M140 62h4M148 62h4M40 66h4M84 66h4M96 66h4M108 66h4M84 70h12M120 70h4M12 74h4M68 74h8M88 74h8M168 74h4M20 78h4M28 78h4M72 78h4M104 78h4M160 78h8M112 82h4M48 86h4M80 86h4M92 86h12M132 86h4M52 90h4M100 90h4M120 90h4M68 94h4M80 94h4M120 94h4M168 94h4M84 98h4M140 98h4M156 98h4M76 102h4M128 102h8M144 102h8M156 102h4M164 106h4M84 110h4M156 114h4M168 114h4M88 118h4M100 122h4M152 122h4M168 122h4M116 126h8M168 138h4M164 146h4"/><path stroke="#fff" stroke-opacity="0.07" d="M80 2h4M148 2h4M156 2h4M4 6h4M36 6h4M52 6h4M72 6h4M124 6h8M24 10h4M48 10h4M24 14h4M36 18h4M64 18h4M100 18h4M128 18h4M156 18h8M40 22h4M92 22h4M100 22h8M152 22h4M4 26h4M16 26h4M64 26h4M124 26h4M76 30h4M144 30h4M104 34h4M144 34h8M168 34h4M100 38h4M156 38h4M64 42h4M84 42h4M104 42h4M76 46h4M136 46h4M92 50h4M120 50h4M168 50h4M48 54h4M104 54h4M168 54h4M80 58h4M124 58h4M140 58h4M76 62h4M144 66h4M168 66h4M80 70h4M144 74h4M152 74h4M144 78h4M152 82h4M152 86h4M140 90h4M84 94h4M156 94h4"/><path stroke="#fff" stroke-opacity="0.10" d="M0 2h4M68 2h4M92 2h4M84 6h4M96 6h4M160 6h4M84 10h8M96 10h4M148 10h4M168 10h4M144 14h12M112 18h8M156 22h4M132 26h4M156 26h4M72 30h4M136 30h4M152 30h4M76 34h4M128 34h4M148 42h4M104 50h4M112 50h4M136 50h4M136 54h4M144 54h4M60 66h4M104 70h4M168 70h4M140 74h4M156 74h4"/><path stroke="#000" stroke-opacity="0.05" d="M8 2h4M24 2h4M40 2h8M76 2h4M108 2h4M116 2h4M124 2h4M56 6h4M76 6h4M88 6h8M104 6h4M136 6h8M168 6h4M0 10h4M8 10h4M16 10h4M28 10h4M68 10h4M160 10h4M4 14h4M36 14h4M64 14h4M76 14h4M88 14h12M128 14h4M136 14h4M4 18h8M72 18h4M88 18h4M96 18h4M136 18h4M28 22h4M80 22h4M88 22h4M116 22h12M132 22h4M144 22h4M160 22h4M20 26h4M56 26h4M72 26h12M92 26h4M136 26h4M148 26h4M164 26h4M20 30h4M52 30h4M124 30h8M8 34h4M44 34h4M56 34h4M96 34h4M132 34h4M152 34h4M0 38h4M8 38h4M20 38h4M64 38h4M88 38h12M4 42h4M16 42h8M68 42h4M88 42h4M140 42h8M4 46h4M32 46h4M40 46h4M64 46h4M112 46h4M16 50h8M48 50h4M60 50h4M76 50h8M96 50h4M140 50h4M148 50h8M4 54h4M20 54h4M32 54h4M72 54h4M80 54h4M108 54h4M120 54h4M128 54h8M0 58h4M36 58h4M64 58h4M112 58h4M144 58h4M160 58h4M4 62h4M44 62h4M64 62h4M88 62h8M104 62h4M160 62h4M52 66h4M64 66h4M120 66h4M132 66h4M152 66h4M160 66h4M4 70h4M48 70h4M60 70h4M108 70h4M116 70h4M132 70h4M148 70h4M160 70h4M16 74h4M28 74h4M64 74h4M108 74h4M128 74h4M136 74h4M160 74h4M84 78h4M96 78h4M112 78h4M120 78h4M132 78h4M140 78h4M4 82h4M52 82h4M60 82h4M88 82h4M120 82h8M132 82h12M156 82h4M168 82h4M0 86h4M108 86h4M116 86h8M156 86h4M0 90h4M20 90h4M28 90h4M64 90h4M80 90h8M112 90h4M124 90h8M136 90h4M144 90h8M164 90h4M12 94h4M36 94h4M44 94h4M64 94h4M112 94h4M132 94h4M144 94h4M152 94h4M160 94h8M16 98h4M48 98h4M68 98h4M80 98h4M100 98h4M144 98h4M160 98h4M168 98h4M16 102h4M24 102h4M36 102h4M48 102h4M64 102h4M84 102h8M112 102h4M120 102h4M136 102h4M0 106h4M76 106h4M88 106h4M120 106h4M132 106h8M152 106h4M4 110h4M36 110h4M96 110h8M120 110h4M132 110h4M8 114h4M24 114h4M36 114h4M100 114h4M128 114h4M148 114h4M8 118h4M16 118h4M32 118h4M44 118h4M72 118h4M108 118h4M124 118h4M148 118h8M16 122h8M72 122h4M80 122h4M92 122h4M104 122h8M124 122h12M144 122h4M4 126h4M20 126h4M44 126h4M56 126h4M68 126h4M88 126h4M100 126h8M124 126h4M136 126h12M160 126h4M16 130h8M44 130h4M92 130h4M100 130h4M156 130h4M8 134h4M16 134h12M80 134h4M136 134h4M156 134h4M164 134h4M28 138h8M44 138h4M92 138h4M104 138h4M120 138h4M140 138h4M152 138h4M160 138h8M24 142h8M48 142h4M56 142h8M100 142h4M128 142h4M144 142h4M4 146h4M40 146h4M84 146h4M96 146h4M124 146h8M168 146h4M12 150h8M56 150h4M68 150h4M80 150h4M100 150h4M112 150h4M144 150h4M40 154h8M60 154h4M72 154h4M108 154h4M132 154h4M148 154h4M156 154h4M16 158h4M28 158h4M36 158h4M120 158h4M148 158h4M156 158h4M12 162h4M28 162h4M64 162h4M80 162h4M104 162h4M116 162h4M148 162h4M16 166h4M48 166h8M92 166h4M104 166h4M116 166h4M136 166h4M44 170h4M64 170h4M92 170h8M112 170h4M120 170h4M128 170h4M140 170h4M88 174h4M124 174h4M152 174h4M0 178h4M12 178h4M20 178h4M36 178h4M120 178h4M148 178h4"/><path stroke="#000" stroke-opacity="0.10" d="M36 2h4M56 2h8M152 2h4M164 2h4M8 6h4M20 6h8M68 6h4M100 6h4M164 6h4M44 10h4M64 10h4M136 10h4M152 10h4M16 14h4M44 14h4M60 14h4M100 14h4M116 14h8M24 18h4M32 18h4M52 18h8M68 18h4M80 18h4M120 18h4M132 18h4M140 18h12M64 22h4M76 22h4M60 26h4M84 26h4M160 26h4M12 30h4M56 30h8M88 30h4M120 30h4M132 30h4M156 30h4M164 30h4M4 34h4M20 34h4M40 34h4M52 34h4M72 34h4M108 34h4M156 34h4M164 34h4M72 38h4M136 38h8M168 38h4M0 42h4M40 42h4M52 42h4M116 42h4M124 42h4M136 42h4M0 46h4M20 46h4M96 46h4M120 46h4M156 46h4M12 50h4M84 50h4M128 50h4M0 54h4M52 54h8M48 58h4M120 58h4M132 58h4M152 58h4M20 62h4M32 62h4M52 62h8M80 66h4M88 66h4M100 66h4M116 66h4M128 66h4M136 66h8M164 66h4M24 70h4M56 70h4M76 70h4M128 70h4M136 70h4M152 70h4M0 74h8M36 74h4M48 74h8M112 74h4M132 74h4M56 78h8M100 78h4M124 78h4M136 78h4M168 78h4M92 82h4M100 82h4M108 82h4M12 86h4M28 86h4M96 90h4M132 90h4M16 94h4M24 94h4M52 94h4M148 94h4M4 98h4M72 98h4M0 102h4M12 102h4M28 102h4M92 102h4M168 102h4M48 106h4M72 106h4M80 106h4M104 106h4M144 106h4M40 110h4M52 110h4M80 110h4M128 110h4M4 114h4M80 114h4M164 114h4M20 118h4M28 118h4M36 118h4M96 118h4M116 118h4M140 118h8M164 118h4M44 122h8M112 122h8M0 126h4M4 130h4M56 130h4M84 130h4M164 130h4M4 134h4M68 134h4M108 134h4M24 138h4M40 138h4M124 138h4M12 142h4M20 142h4M92 142h4M104 142h4M0 146h4M56 146h4M112 146h4M144 146h4M24 150h4M76 150h4M124 150h4M152 150h4M8 154h4M32 154h4M112 154h4M164 154h4M76 158h4M88 158h4M160 158h4M128 162h4M144 162h4M0 166h4M24 166h4M44 166h4M100 166h4M144 166h4M168 166h4M0 170h4M36 170h8M52 170h4M88 170h4M104 170h4M132 170h4M0 174h4M8 174h4M28 174h8M52 174h4M60 174h4M100 174h4M120 174h4M136 174h4M148 174h4M160 174h4M48 178h8M84 178h4M112 178h4M140 178h4M152 178h4M164 178h4"/><path stroke="#000" stroke-opacity="0.16" d="M12 2h4M144 6h4M152 6h4M100 10h8M84 18h4M168 18h4M16 22h4M24 22h4M44 22h4M152 26h4M48 30h4M80 30h4M116 30h4M112 34h4M112 38h4M120 38h4M164 38h4M8 42h8M36 42h4M96 42h4M140 46h4M164 46h4M44 50h4M68 54h4M136 58h4M24 62h4M84 62h4M0 66h4M8 66h4M48 66h4M32 70h4M140 70h8M20 74h4M100 74h4M120 74h4M76 78h4M16 82h4M28 82h4M56 82h4M80 82h4M128 82h4M144 82h4M16 86h4M44 86h4M76 86h4M136 86h4M152 90h4M76 94h4M100 94h4M124 94h8M44 98h4M160 102h4M36 106h4M148 106h4M160 106h4M104 110h4M124 110h4M140 110h4M160 110h4M32 114h4M72 114h4M104 114h4M144 114h4M12 118h4M136 118h4M136 122h4M8 126h4M132 126h4M148 126h4M12 130h4M60 130h4M132 130h4M160 130h4M132 134h4M152 134h4M100 138h4M24 146h4M68 146h4M116 146h4M148 146h4M88 150h4M164 150h4M4 154h4M48 154h4M88 154h4M56 158h4M64 158h4M152 158h4M120 162h8M132 162h4M156 162h4M164 162h4M140 166h4M160 170h8M72 174h4M116 174h4M104 178h4M132 178h4"/></g></g></g><rect x="172" y="0" width="148" height="180" fill="#000"/></svg></div><div class="r" style="left:886px;top:738px;width:240px;height:21px;background:#24354c;border-radius:5px;box-shadow:inset 0 0 0 1px rgba(110,110,128,.5)"></div><div class="r" style="left:919px;top:740px;width:10px;height:17px;background:#3d85e0;border-radius:1px"></div><div class="r" style="left:886px;top:763px;width:240px;height:21px;background:#24354c;border-radius:5px;box-shadow:inset 0 0 0 1px rgba(110,110,128,.5)"></div><div class="r" style="left:940px;top:765px;width:10px;height:17px;background:#3d85e0;border-radius:1px"></div><div class="r" style="left:886px;top:788px;width:21px;height:21px;background:#2b4d76;border-radius:5px;box-shadow:inset 0 0 0 1px rgba(110,110,128,.5)"></div><svg class="r" style="left:886px;top:788px;" width="21" height="21" viewBox="0 0 21 21"><polygon points="13,6.3 13,14.7 8,10.5" fill="#fff"/></svg><div class="r" style="left:915px;top:788px;width:21px;height:21px;background:#2b4d76;border-radius:5px;box-shadow:inset 0 0 0 1px rgba(110,110,128,.5)"></div><svg class="r" style="left:915px;top:788px;" width="21" height="21" viewBox="0 0 21 21"><polygon points="8.6,6.3 8.6,14.7 13.6,10.5" fill="#fff"/></svg><div class="r" style="left:944px;top:788px;width:68px;height:21px;background:#2b4d76;border-radius:5px;box-shadow:inset 0 0 0 1px rgba(110,110,128,.5)"></div><svg class="r" style="left:944px;top:788px;" width="68" height="21" viewBox="0 0 68 21"><polygon points="13.7,4.9 13.7,16.3 23.8,10.6" fill="#fff" stroke="#fff" stroke-width="1.4" stroke-linejoin="round"/></svg><div class="r" style="left:1020px;top:788px;width:21px;height:21px;background:#24354c;border-radius:5px;box-shadow:inset 0 0 0 1px rgba(110,110,128,.5)"></div><div class="r" style="left:1132px;top:788px;width:21px;height:21px;background:#24354c;border-radius:5px;box-shadow:inset 0 0 0 1px rgba(110,110,128,.5)"></div><div class="r" style="left:878px;top:525px;width:353px;height:311px;background:transparent;box-shadow:inset 0 0 0 1px rgba(110,110,128,.5);pointer-events:none"></div><div class="r" style="left:1235px;top:5px;width:648px;height:831px;background:#1c1c18;"></div><div class="r" style="left:1235px;top:5px;width:648px;height:21px;background:#0a0a09;"></div><div class="r" style="left:1236px;top:25px;width:646px;height:1px;background:rgba(110,110,128,.5);"></div><svg class="r" style="left:1235px;top:5px;" width="648" height="21" viewBox="0 0 648 21"><polygon points="6.30,6.00 16.70,6.00 11.50,15.00" fill="#fff"/><path d="M632.20 6.20L640.80 14.80M640.80 6.20L632.20 14.80" stroke="#fff" stroke-width="1.15" fill="none"/></svg><div class="r" style="left:1239px;top:53px;width:640px;height:1px;background:rgba(110,110,128,.5);"></div><div class="c" style="left:1243px;top:57px;width:632px;height:771px;"><div class="r" style="left:0px;top:0px;width:618px;height:19px;background:#303033;"></div><div class="r" style="left:618px;top:0px;width:14px;height:771px;background:#242420;"></div><div class="r" style="left:621px;top:3px;width:8px;height:202px;background:#4f4f4f;border-radius:4px"></div><svg class="r" style="left:381px;top:3px;" width="9" height="8" viewBox="0 0 9 8"><polygon points="1,1.4 8,1.4 4.5,7.2" fill="#fff"/></svg><svg class="r" style="left:4px;top:21px;" width="15" height="15" viewBox="0 0 15 15"><polygon points="4.35,3.86 4.35,11.14 10.65,7.50" fill="#33f033"/></svg><div class="c" style="left:260px;top:21px;width:126px;height:15px;border-radius:5px"><div class="r" style="left:0px;top:0px;width:126px;height:15px;background:#24354c;"></div><div class="r" style="left:1px;top:1px;width:77.0px;height:13px;background:#e6b300;border-radius:4px 0 0 4px/5px 0 0 5px"></div></div><div class="r" style="left:260px;top:21px;width:126px;height:15px;background:transparent;border-radius:5px;box-shadow:inset 0 0 0 1px rgba(110,110,128,.5)"></div><svg class="r" style="left:4px;top:40px;" width="15" height="15" viewBox="0 0 15 15"><polygon points="4.35,3.86 4.35,11.14 10.65,7.50" fill="#fff"/></svg><div class="c" style="left:260px;top:40px;width:126px;height:15px;border-radius:5px"><div class="r" style="left:0px;top:0px;width:126px;height:15px;background:#24354c;"></div><div class="r" style="left:1px;top:1px;width:13.5px;height:13px;background:#e6b300;border-radius:4px 0 0 4px/5px 0 0 5px"></div></div><div class="r" style="left:260px;top:40px;width:126px;height:15px;background:transparent;border-radius:5px;box-shadow:inset 0 0 0 1px rgba(110,110,128,.5)"></div><svg class="r" style="left:4px;top:59px;" width="15" height="15" viewBox="0 0 15 15"><polygon points="4.35,3.86 4.35,11.14 10.65,7.50" fill="#fff"/></svg><div class="c" style="left:260px;top:59px;width:126px;height:15px;border-radius:5px"><div class="r" style="left:0px;top:0px;width:126px;height:15px;background:#24354c;"></div><div class="r" style="left:1px;top:1px;width:11.7px;height:13px;background:#e6b300;border-radius:4px 0 0 4px/5px 0 0 5px"></div></div><div class="r" style="left:260px;top:59px;width:126px;height:15px;background:transparent;border-radius:5px;box-shadow:inset 0 0 0 1px rgba(110,110,128,.5)"></div><svg class="r" style="left:4px;top:78px;" width="15" height="15" viewBox="0 0 15 15"><polygon points="4.35,3.86 4.35,11.14 10.65,7.50" fill="#fff"/></svg><div class="c" style="left:260px;top:78px;width:126px;height:15px;border-radius:5px"><div class="r" style="left:0px;top:0px;width:126px;height:15px;background:#24354c;"></div><div class="r" style="left:1px;top:1px;width:10.2px;height:13px;background:#e6b300;border-radius:4px 0 0 4px/5px 0 0 5px"></div></div><div class="r" style="left:260px;top:78px;width:126px;height:15px;background:transparent;border-radius:5px;box-shadow:inset 0 0 0 1px rgba(110,110,128,.5)"></div><svg class="r" style="left:4px;top:97px;" width="15" height="15" viewBox="0 0 15 15"><polygon points="4.35,3.86 4.35,11.14 10.65,7.50" fill="#fff"/></svg><div class="c" style="left:260px;top:97px;width:126px;height:15px;border-radius:5px"><div class="r" style="left:0px;top:0px;width:126px;height:15px;background:#24354c;"></div><div class="r" style="left:1px;top:1px;width:9.9px;height:13px;background:#e6b300;border-radius:4px 0 0 4px/5px 0 0 5px"></div></div><div class="r" style="left:260px;top:97px;width:126px;height:15px;background:transparent;border-radius:5px;box-shadow:inset 0 0 0 1px rgba(110,110,128,.5)"></div><svg class="r" style="left:4px;top:116px;" width="15" height="15" viewBox="0 0 15 15"><polygon points="4.35,3.86 4.35,11.14 10.65,7.50" fill="#fff"/></svg><div class="c" style="left:260px;top:116px;width:126px;height:15px;border-radius:5px"><div class="r" style="left:0px;top:0px;width:126px;height:15px;background:#24354c;"></div><div class="r" style="left:1px;top:1px;width:9.2px;height:13px;background:#e6b300;border-radius:4px 0 0 4px/5px 0 0 5px"></div></div><div class="r" style="left:260px;top:116px;width:126px;height:15px;background:transparent;border-radius:5px;box-shadow:inset 0 0 0 1px rgba(110,110,128,.5)"></div><svg class="r" style="left:4px;top:135px;" width="15" height="15" viewBox="0 0 15 15"><polygon points="3.86,4.35 11.14,4.35 7.50,10.65" fill="#fff"/></svg><div class="c" style="left:260px;top:135px;width:126px;height:15px;border-radius:5px"><div class="r" style="left:0px;top:0px;width:126px;height:15px;background:#24354c;"></div><div class="r" style="left:1px;top:1px;width:8.9px;height:13px;background:#e6b300;border-radius:4px 0 0 4px/5px 0 0 5px"></div></div><div class="r" style="left:260px;top:135px;width:126px;height:15px;background:transparent;border-radius:5px;box-shadow:inset 0 0 0 1px rgba(110,110,128,.5)"></div><div class="r" style="left:0px;top:154px;width:618px;height:1px;background:rgba(110,110,128,.5);"></div><div class="c" style="left:260px;top:158px;width:126px;height:15px;border-radius:5px"><div class="r" style="left:0px;top:0px;width:126px;height:15px;background:#24354c;"></div><div class="r" style="left:1px;top:1px;width:8.2px;height:13px;background:#e6b300;border-radius:4px 0 0 4px/5px 0 0 5px"></div></div><div class="r" style="left:260px;top:158px;width:126px;height:15px;background:transparent;border-radius:5px;box-shadow:inset 0 0 0 1px rgba(110,110,128,.5)"></div><div class="c" style="left:260px;top:177px;width:126px;height:15px;border-radius:5px"><div class="r" style="left:0px;top:0px;width:126px;height:15px;background:#24354c;"></div><div class="r" style="left:1px;top:1px;width:0.4px;height:13px;background:#e6b300;border-radius:4px 0 0 4px/5px 0 0 5px"></div></div><div class="r" style="left:260px;top:177px;width:126px;height:15px;background:transparent;border-radius:5px;box-shadow:inset 0 0 0 1px rgba(110,110,128,.5)"></div><div class="c" style="left:260px;top:196px;width:126px;height:15px;border-radius:5px"><div class="r" style="left:0px;top:0px;width:126px;height:15px;background:#24354c;"></div><div class="r" style="left:1px;top:4px;width:1px;height:7px;background:#e6b300;opacity:.7"></div></div><div class="r" style="left:260px;top:196px;width:126px;height:15px;background:transparent;border-radius:5px;box-shadow:inset 0 0 0 1px rgba(110,110,128,.5)"></div><div class="c" style="left:260px;top:215px;width:126px;height:15px;border-radius:5px"><div class="r" style="left:0px;top:0px;width:126px;height:15px;background:#24354c;"></div><div class="r" style="left:1px;top:4px;width:1px;height:7px;background:#e6b300;opacity:.7"></div></div><div class="r" style="left:260px;top:215px;width:126px;height:15px;background:transparent;border-radius:5px;box-shadow:inset 0 0 0 1px rgba(110,110,128,.5)"></div><div class="c" style="left:260px;top:234px;width:126px;height:15px;border-radius:5px"><div class="r" style="left:0px;top:0px;width:126px;height:15px;background:#24354c;"></div></div><div class="r" style="left:260px;top:234px;width:126px;height:15px;background:transparent;border-radius:5px;box-shadow:inset 0 0 0 1px rgba(110,110,128,.5)"></div><div class="c" style="left:260px;top:253px;width:126px;height:15px;border-radius:5px"><div class="r" style="left:0px;top:0px;width:126px;height:15px;background:#24354c;"></div></div><div class="r" style="left:260px;top:253px;width:126px;height:15px;background:transparent;border-radius:5px;box-shadow:inset 0 0 0 1px rgba(110,110,128,.5)"></div><div class="c" style="left:260px;top:272px;width:126px;height:15px;border-radius:5px"><div class="r" style="left:0px;top:0px;width:126px;height:15px;background:#24354c;"></div></div><div class="r" style="left:260px;top:272px;width:126px;height:15px;background:transparent;border-radius:5px;box-shadow:inset 0 0 0 1px rgba(110,110,128,.5)"></div><div class="c" style="left:260px;top:291px;width:126px;height:15px;border-radius:5px"><div class="r" style="left:0px;top:0px;width:126px;height:15px;background:#24354c;"></div></div><div class="r" style="left:260px;top:291px;width:126px;height:15px;background:transparent;border-radius:5px;box-shadow:inset 0 0 0 1px rgba(110,110,128,.5)"></div><div class="r" style="left:0px;top:310px;width:618px;height:1px;background:rgba(110,110,128,.5);"></div><svg class="r" style="left:4px;top:314px;" width="15" height="15" viewBox="0 0 15 15"><polygon points="4.35,3.86 4.35,11.14 10.65,7.50" fill="#fff"/></svg><div class="c" style="left:260px;top:314px;width:126px;height:15px;border-radius:5px"><div class="r" style="left:0px;top:0px;width:126px;height:15px;background:#24354c;"></div><div class="r" style="left:1px;top:1px;width:8.3px;height:13px;background:#e6b300;border-radius:4px 0 0 4px/5px 0 0 5px"></div></div><div class="r" style="left:260px;top:314px;width:126px;height:15px;background:transparent;border-radius:5px;box-shadow:inset 0 0 0 1px rgba(110,110,128,.5)"></div><svg class="r" style="left:4px;top:333px;" width="15" height="15" viewBox="0 0 15 15"><polygon points="4.35,3.86 4.35,11.14 10.65,7.50" fill="#fff"/></svg><div class="c" style="left:260px;top:333px;width:126px;height:15px;border-radius:5px"><div class="r" style="left:0px;top:0px;width:126px;height:15px;background:#24354c;"></div><div class="r" style="left:1px;top:1px;width:3.6px;height:13px;background:#e6b300;border-radius:4px 0 0 4px/5px 0 0 5px"></div></div><div class="r" style="left:260px;top:333px;width:126px;height:15px;background:transparent;border-radius:5px;box-shadow:inset 0 0 0 1px rgba(110,110,128,.5)"></div><svg class="r" style="left:4px;top:352px;" width="15" height="15" viewBox="0 0 15 15"><polygon points="4.35,3.86 4.35,11.14 10.65,7.50" fill="#fff"/></svg><div class="c" style="left:260px;top:352px;width:126px;height:15px;border-radius:5px"><div class="r" style="left:0px;top:0px;width:126px;height:15px;background:#24354c;"></div><div class="r" style="left:1px;top:1px;width:3.5px;height:13px;background:#e6b300;border-radius:4px 0 0 4px/5px 0 0 5px"></div></div><div class="r" style="left:260px;top:352px;width:126px;height:15px;background:transparent;border-radius:5px;box-shadow:inset 0 0 0 1px rgba(110,110,128,.5)"></div><svg class="r" style="left:4px;top:371px;" width="15" height="15" viewBox="0 0 15 15"><polygon points="4.35,3.86 4.35,11.14 10.65,7.50" fill="#fff"/></svg><div class="c" style="left:260px;top:371px;width:126px;height:15px;border-radius:5px"><div class="r" style="left:0px;top:0px;width:126px;height:15px;background:#24354c;"></div><div class="r" style="left:1px;top:1px;width:3.4px;height:13px;background:#e6b300;border-radius:4px 0 0 4px/5px 0 0 5px"></div></div><div class="r" style="left:260px;top:371px;width:126px;height:15px;background:transparent;border-radius:5px;box-shadow:inset 0 0 0 1px rgba(110,110,128,.5)"></div><svg class="r" style="left:4px;top:390px;" width="15" height="15" viewBox="0 0 15 15"><polygon points="4.35,3.86 4.35,11.14 10.65,7.50" fill="#fff"/></svg><div class="c" style="left:260px;top:390px;width:126px;height:15px;border-radius:5px"><div class="r" style="left:0px;top:0px;width:126px;height:15px;background:#24354c;"></div><div class="r" style="left:1px;top:1px;width:3.1px;height:13px;background:#e6b300;border-radius:4px 0 0 4px/5px 0 0 5px"></div></div><div class="r" style="left:260px;top:390px;width:126px;height:15px;background:transparent;border-radius:5px;box-shadow:inset 0 0 0 1px rgba(110,110,128,.5)"></div><svg class="r" style="left:4px;top:409px;" width="15" height="15" viewBox="0 0 15 15"><polygon points="4.35,3.86 4.35,11.14 10.65,7.50" fill="#fff"/></svg><div class="c" style="left:260px;top:409px;width:126px;height:15px;border-radius:5px"><div class="r" style="left:0px;top:0px;width:126px;height:15px;background:#24354c;"></div><div class="r" style="left:1px;top:1px;width:3.1px;height:13px;background:#e6b300;border-radius:4px 0 0 4px/5px 0 0 5px"></div></div><div class="r" style="left:260px;top:409px;width:126px;height:15px;background:transparent;border-radius:5px;box-shadow:inset 0 0 0 1px rgba(110,110,128,.5)"></div><svg class="r" style="left:4px;top:428px;" width="15" height="15" viewBox="0 0 15 15"><polygon points="4.35,3.86 4.35,11.14 10.65,7.50" fill="#fff"/></svg><div class="c" style="left:260px;top:428px;width:126px;height:15px;border-radius:5px"><div class="r" style="left:0px;top:0px;width:126px;height:15px;background:#24354c;"></div><div class="r" style="left:1px;top:1px;width:1.9px;height:13px;background:#e6b300;border-radius:4px 0 0 4px/5px 0 0 5px"></div></div><div class="r" style="left:260px;top:428px;width:126px;height:15px;background:transparent;border-radius:5px;box-shadow:inset 0 0 0 1px rgba(110,110,128,.5)"></div><svg class="r" style="left:4px;top:447px;" width="15" height="15" viewBox="0 0 15 15"><polygon points="4.35,3.86 4.35,11.14 10.65,7.50" fill="#fff"/></svg><div class="c" style="left:260px;top:447px;width:126px;height:15px;border-radius:5px"><div class="r" style="left:0px;top:0px;width:126px;height:15px;background:#24354c;"></div><div class="r" style="left:1px;top:1px;width:1.6px;height:13px;background:#e6b300;border-radius:4px 0 0 4px/5px 0 0 5px"></div></div><div class="r" style="left:260px;top:447px;width:126px;height:15px;background:transparent;border-radius:5px;box-shadow:inset 0 0 0 1px rgba(110,110,128,.5)"></div><svg class="r" style="left:4px;top:466px;" width="15" height="15" viewBox="0 0 15 15"><polygon points="4.35,3.86 4.35,11.14 10.65,7.50" fill="#fff"/></svg><div class="c" style="left:260px;top:466px;width:126px;height:15px;border-radius:5px"><div class="r" style="left:0px;top:0px;width:126px;height:15px;background:#24354c;"></div><div class="r" style="left:1px;top:1px;width:1.5px;height:13px;background:#e6b300;border-radius:4px 0 0 4px/5px 0 0 5px"></div></div><div class="r" style="left:260px;top:466px;width:126px;height:15px;background:transparent;border-radius:5px;box-shadow:inset 0 0 0 1px rgba(110,110,128,.5)"></div><svg class="r" style="left:4px;top:485px;" width="15" height="15" viewBox="0 0 15 15"><polygon points="4.35,3.86 4.35,11.14 10.65,7.50" fill="#fff"/></svg><div class="c" style="left:260px;top:485px;width:126px;height:15px;border-radius:5px"><div class="r" style="left:0px;top:0px;width:126px;height:15px;background:#24354c;"></div><div class="r" style="left:1px;top:1px;width:1.3px;height:13px;background:#e6b300;border-radius:4px 0 0 4px/5px 0 0 5px"></div></div><div class="r" style="left:260px;top:485px;width:126px;height:15px;background:transparent;border-radius:5px;box-shadow:inset 0 0 0 1px rgba(110,110,128,.5)"></div><svg class="r" style="left:4px;top:504px;" width="15" height="15" viewBox="0 0 15 15"><polygon points="4.35,3.86 4.35,11.14 10.65,7.50" fill="#fff"/></svg><div class="c" style="left:260px;top:504px;width:126px;height:15px;border-radius:5px"><div class="r" style="left:0px;top:0px;width:126px;height:15px;background:#24354c;"></div><div class="r" style="left:1px;top:1px;width:1.2px;height:13px;background:#e6b300;border-radius:4px 0 0 4px/5px 0 0 5px"></div></div><div class="r" style="left:260px;top:504px;width:126px;height:15px;background:transparent;border-radius:5px;box-shadow:inset 0 0 0 1px rgba(110,110,128,.5)"></div><svg class="r" style="left:4px;top:523px;" width="15" height="15" viewBox="0 0 15 15"><polygon points="4.35,3.86 4.35,11.14 10.65,7.50" fill="#fff"/></svg><div class="c" style="left:260px;top:523px;width:126px;height:15px;border-radius:5px"><div class="r" style="left:0px;top:0px;width:126px;height:15px;background:#24354c;"></div><div class="r" style="left:1px;top:1px;width:1.0px;height:13px;background:#e6b300;border-radius:4px 0 0 4px/5px 0 0 5px"></div></div><div class="r" style="left:260px;top:523px;width:126px;height:15px;background:transparent;border-radius:5px;box-shadow:inset 0 0 0 1px rgba(110,110,128,.5)"></div><svg class="r" style="left:4px;top:542px;" width="15" height="15" viewBox="0 0 15 15"><polygon points="4.35,3.86 4.35,11.14 10.65,7.50" fill="#fff"/></svg><div class="c" style="left:260px;top:542px;width:126px;height:15px;border-radius:5px"><div class="r" style="left:0px;top:0px;width:126px;height:15px;background:#24354c;"></div><div class="r" style="left:1px;top:1px;width:1.0px;height:13px;background:#e6b300;border-radius:4px 0 0 4px/5px 0 0 5px"></div></div><div class="r" style="left:260px;top:542px;width:126px;height:15px;background:transparent;border-radius:5px;box-shadow:inset 0 0 0 1px rgba(110,110,128,.5)"></div><svg class="r" style="left:4px;top:561px;" width="15" height="15" viewBox="0 0 15 15"><polygon points="4.35,3.86 4.35,11.14 10.65,7.50" fill="#fff"/></svg><div class="c" style="left:260px;top:561px;width:126px;height:15px;border-radius:5px"><div class="r" style="left:0px;top:0px;width:126px;height:15px;background:#24354c;"></div><div class="r" style="left:1px;top:1px;width:0.8px;height:13px;background:#e6b300;border-radius:4px 0 0 4px/5px 0 0 5px"></div></div><div class="r" style="left:260px;top:561px;width:126px;height:15px;background:transparent;border-radius:5px;box-shadow:inset 0 0 0 1px rgba(110,110,128,.5)"></div><svg class="r" style="left:4px;top:580px;" width="15" height="15" viewBox="0 0 15 15"><polygon points="4.35,3.86 4.35,11.14 10.65,7.50" fill="#fff"/></svg><div class="c" style="left:260px;top:580px;width:126px;height:15px;border-radius:5px"><div class="r" style="left:0px;top:0px;width:126px;height:15px;background:#24354c;"></div><div class="r" style="left:1px;top:1px;width:0.8px;height:13px;background:#e6b300;border-radius:4px 0 0 4px/5px 0 0 5px"></div></div><div class="r" style="left:260px;top:580px;width:126px;height:15px;background:transparent;border-radius:5px;box-shadow:inset 0 0 0 1px rgba(110,110,128,.5)"></div><svg class="r" style="left:4px;top:599px;" width="15" height="15" viewBox="0 0 15 15"><polygon points="4.35,3.86 4.35,11.14 10.65,7.50" fill="#fff"/></svg><div class="c" style="left:260px;top:599px;width:126px;height:15px;border-radius:5px"><div class="r" style="left:0px;top:0px;width:126px;height:15px;background:#24354c;"></div><div class="r" style="left:1px;top:1px;width:0.8px;height:13px;background:#e6b300;border-radius:4px 0 0 4px/5px 0 0 5px"></div></div><div class="r" style="left:260px;top:599px;width:126px;height:15px;background:transparent;border-radius:5px;box-shadow:inset 0 0 0 1px rgba(110,110,128,.5)"></div><svg class="r" style="left:4px;top:618px;" width="15" height="15" viewBox="0 0 15 15"><polygon points="4.35,3.86 4.35,11.14 10.65,7.50" fill="#fff"/></svg><div class="c" style="left:260px;top:618px;width:126px;height:15px;border-radius:5px"><div class="r" style="left:0px;top:0px;width:126px;height:15px;background:#24354c;"></div><div class="r" style="left:1px;top:1px;width:0.7px;height:13px;background:#e6b300;border-radius:4px 0 0 4px/5px 0 0 5px"></div></div><div class="r" style="left:260px;top:618px;width:126px;height:15px;background:transparent;border-radius:5px;box-shadow:inset 0 0 0 1px rgba(110,110,128,.5)"></div><svg class="r" style="left:4px;top:637px;" width="15" height="15" viewBox="0 0 15 15"><polygon points="4.35,3.86 4.35,11.14 10.65,7.50" fill="#fff"/></svg><div class="c" style="left:260px;top:637px;width:126px;height:15px;border-radius:5px"><div class="r" style="left:0px;top:0px;width:126px;height:15px;background:#24354c;"></div><div class="r" style="left:1px;top:1px;width:0.6px;height:13px;background:#e6b300;border-radius:4px 0 0 4px/5px 0 0 5px"></div></div><div class="r" style="left:260px;top:637px;width:126px;height:15px;background:transparent;border-radius:5px;box-shadow:inset 0 0 0 1px rgba(110,110,128,.5)"></div><svg class="r" style="left:4px;top:656px;" width="15" height="15" viewBox="0 0 15 15"><polygon points="4.35,3.86 4.35,11.14 10.65,7.50" fill="#fff"/></svg><div class="c" style="left:260px;top:656px;width:126px;height:15px;border-radius:5px"><div class="r" style="left:0px;top:0px;width:126px;height:15px;background:#24354c;"></div><div class="r" style="left:1px;top:1px;width:0.6px;height:13px;background:#e6b300;border-radius:4px 0 0 4px/5px 0 0 5px"></div></div><div class="r" style="left:260px;top:656px;width:126px;height:15px;background:transparent;border-radius:5px;box-shadow:inset 0 0 0 1px rgba(110,110,128,.5)"></div><svg class="r" style="left:4px;top:675px;" width="15" height="15" viewBox="0 0 15 15"><polygon points="4.35,3.86 4.35,11.14 10.65,7.50" fill="#fff"/></svg><div class="c" style="left:260px;top:675px;width:126px;height:15px;border-radius:5px"><div class="r" style="left:0px;top:0px;width:126px;height:15px;background:#24354c;"></div><div class="r" style="left:1px;top:1px;width:0.5px;height:13px;background:#e6b300;border-radius:4px 0 0 4px/5px 0 0 5px"></div></div><div class="r" style="left:260px;top:675px;width:126px;height:15px;background:transparent;border-radius:5px;box-shadow:inset 0 0 0 1px rgba(110,110,128,.5)"></div><svg class="r" style="left:4px;top:694px;" width="15" height="15" viewBox="0 0 15 15"><polygon points="4.35,3.86 4.35,11.14 10.65,7.50" fill="#fff"/></svg><div class="c" style="left:260px;top:694px;width:126px;height:15px;border-radius:5px"><div class="r" style="left:0px;top:0px;width:126px;height:15px;background:#24354c;"></div><div class="r" style="left:1px;top:1px;width:0.5px;height:13px;background:#e6b300;border-radius:4px 0 0 4px/5px 0 0 5px"></div></div><div class="r" style="left:260px;top:694px;width:126px;height:15px;background:transparent;border-radius:5px;box-shadow:inset 0 0 0 1px rgba(110,110,128,.5)"></div><svg class="r" style="left:4px;top:713px;" width="15" height="15" viewBox="0 0 15 15"><polygon points="4.35,3.86 4.35,11.14 10.65,7.50" fill="#fff"/></svg><div class="c" style="left:260px;top:713px;width:126px;height:15px;border-radius:5px"><div class="r" style="left:0px;top:0px;width:126px;height:15px;background:#24354c;"></div><div class="r" style="left:1px;top:1px;width:0.4px;height:13px;background:#e6b300;border-radius:4px 0 0 4px/5px 0 0 5px"></div></div><div class="r" style="left:260px;top:713px;width:126px;height:15px;background:transparent;border-radius:5px;box-shadow:inset 0 0 0 1px rgba(110,110,128,.5)"></div><svg class="r" style="left:4px;top:732px;" width="15" height="15" viewBox="0 0 15 15"><polygon points="4.35,3.86 4.35,11.14 10.65,7.50" fill="#fff"/></svg><div class="c" style="left:260px;top:732px;width:126px;height:15px;border-radius:5px"><div class="r" style="left:0px;top:0px;width:126px;height:15px;background:#24354c;"></div><div class="r" style="left:1px;top:1px;width:0.4px;height:13px;background:#e6b300;border-radius:4px 0 0 4px/5px 0 0 5px"></div></div><div class="r" style="left:260px;top:732px;width:126px;height:15px;background:transparent;border-radius:5px;box-shadow:inset 0 0 0 1px rgba(110,110,128,.5)"></div><svg class="r" style="left:4px;top:751px;" width="15" height="15" viewBox="0 0 15 15"><polygon points="4.35,3.86 4.35,11.14 10.65,7.50" fill="#fff"/></svg><div class="c" style="left:260px;top:751px;width:126px;height:15px;border-radius:5px"><div class="r" style="left:0px;top:0px;width:126px;height:15px;background:#24354c;"></div><div class="r" style="left:1px;top:4px;width:1px;height:7px;background:#e6b300;opacity:.7"></div></div><div class="r" style="left:260px;top:751px;width:126px;height:15px;background:transparent;border-radius:5px;box-shadow:inset 0 0 0 1px rgba(110,110,128,.5)"></div><svg class="r" style="left:4px;top:770px;" width="15" height="15" viewBox="0 0 15 15"><polygon points="4.35,3.86 4.35,11.14 10.65,7.50" fill="#fff"/></svg><div class="c" style="left:260px;top:770px;width:126px;height:15px;border-radius:5px"><div class="r" style="left:0px;top:0px;width:126px;height:15px;background:#24354c;"></div><div class="r" style="left:1px;top:4px;width:1px;height:7px;background:#e6b300;opacity:.7"></div></div><div class="r" style="left:260px;top:770px;width:126px;height:15px;background:transparent;border-radius:5px;box-shadow:inset 0 0 0 1px rgba(110,110,128,.5)"></div><div class="r" style="left:103px;top:0px;width:1px;height:19px;background:#43434c;"></div><div class="r" style="left:103px;top:19px;width:1px;height:752px;background:#3b3b42;"></div><div class="r" style="left:255px;top:0px;width:1px;height:19px;background:#43434c;"></div><div class="r" style="left:255px;top:19px;width:1px;height:752px;background:#3b3b42;"></div><div class="r" style="left:391px;top:0px;width:1px;height:19px;background:#43434c;"></div><div class="r" style="left:391px;top:19px;width:1px;height:752px;background:#3b3b42;"></div><div class="r" style="left:507px;top:0px;width:1px;height:19px;background:#43434c;"></div><div class="r" style="left:507px;top:19px;width:1px;height:752px;background:#3b3b42;"></div></div><div class="r" style="left:1235px;top:5px;width:648px;height:831px;background:transparent;box-shadow:inset 0 0 0 1px rgba(110,110,128,.5);pointer-events:none"></div><svg class="r" style="left:1867px;top:820px;" width="15" height="15" viewBox="0 0 15 15"><polygon points="15,0 15,15 0,15" fill="#283646"/></svg></div><div id="fg"><span class="t" style="left:28px;top:9px;"><span style="letter-spacing:0.105px">Call stack </span><span style="letter-spacing:-0.136px">sample </span><span style="letter-spacing:-0.246px">parents</span></span><span class="t B d" style="left:13px;top:35px;letter-spacing:0.051px;">Symbol:</span><span class="t B" style="left:86px;top:35px;letter-spacing:0.051px;">CalcVisionShadowcastingDiamond</span><span class="t d" style="left:13px;top:59px;letter-spacing:-0.158px;">Location:</span><span class="t" style="left:74px;top:59px;"><span style="letter-spacing:0.125px">C:\Users\</span><span style="letter-spacing:0.084px">wolf\</span><span style="letter-spacing:0.012px">Desktop\</span><span style="letter-spacing:-0.077px">darkrl\src\</span><span style="letter-spacing:-0.253px">game\</span><span style="letter-spacing:0.000px">vision\</span><span style="letter-spacing:-0.122px">VisionShadowcastDiamond.</span><span style="letter-spacing:-0.246px">cpp:144</span></span><span class="t d" style="left:13px;top:78px;letter-spacing:-0.068px;">Entry point:</span><span class="t" style="left:88px;top:78px;"><span style="letter-spacing:0.125px">C:\Users\</span><span style="letter-spacing:0.084px">wolf\</span><span style="letter-spacing:0.012px">Desktop\</span><span style="letter-spacing:-0.077px">darkrl\src\</span><span style="letter-spacing:-0.253px">game\</span><span style="letter-spacing:0.000px">vision\</span><span style="letter-spacing:-0.122px">VisionShadowcastDiamond.</span><span style="letter-spacing:-0.159px">cpp:9</span></span><span class="t d" style="left:570px;top:78px;letter-spacing:-0.020px;">[DarkRL.exe]</span><span class="t d" style="left:13px;top:101px;"><span style="letter-spacing:-0.176px">Parent </span><span style="letter-spacing:0.104px">call stack:</span></span><span class="t" style="left:152px;top:101px;letter-spacing:-0.019px;">1 / 4</span><span class="t" style="left:215px;top:101px;letter-spacing:-0.100px;">8.38 ms</span><span class="t d" style="left:270px;top:101px;letter-spacing:-0.301px;">(83.75%)</span><span class="t" style="left:369px;top:101px;letter-spacing:-0.031px;"> Show time</span><span class="t" style="left:450.8px;top:99px;letter-spacing:0.391px;font-weight:bold;font-size:15px;-webkit-text-stroke:.55px #fff;">@</span><span class="t" style="left:465px;top:101px;"><span style="letter-spacing:-0.170px"> Frame </span><span style="letter-spacing:-0.104px">location:</span></span><span class="t" style="left:586px;top:101px;letter-spacing:-0.207px;">Source code</span><span class="t" style="left:686px;top:101px;letter-spacing:-0.099px;">Entry point</span><span class="t" style="left:776px;top:101px;letter-spacing:-0.191px;">Return address</span><span class="t" style="left:892px;top:101px;letter-spacing:-0.152px;">Symbol address</span><div class="c" style="left:13px;top:123px;width:1210px;height:388px;"><span class="t" style="left:5px;top:3px;letter-spacing:-0.347px;">Frame</span><span class="t" style="left:51px;top:3px;letter-spacing:-0.178px;">Function</span><span class="t" style="left:409px;top:3px;letter-spacing:-0.211px;">Location</span><span class="t" style="left:1094px;top:3px;letter-spacing:-0.253px;">Image</span><span class="t" style="left:5px;top:22px;letter-spacing:-0.469px;">0</span><span class="t" style="left:51px;top:22px;"><span style="letter-spacing:-0.143px">Floor::</span><span style="letter-spacing:-0.181px">CalcLightNoLuminance</span></span><span class="t d" style="left:409px;top:22px;"><span style="letter-spacing:0.125px">C:\Users\</span><span style="letter-spacing:0.084px">wolf\</span><span style="letter-spacing:0.012px">Desktop\</span><span style="letter-spacing:-0.077px">darkrl\src\</span><span style="letter-spacing:-0.189px">game\floor\</span><span style="letter-spacing:-0.161px">Floor.cpp:</span><span style="letter-spacing:-0.458px">932</span></span><span class="t d" style="left:1094px;top:22px;letter-spacing:-0.020px;">[DarkRL.exe]</span><span class="t" style="left:5px;top:41px;letter-spacing:-0.469px;">1</span><span class="t" style="left:51px;top:41px;"><span style="letter-spacing:-0.283px">&lt;lambda_</span><span style="letter-spacing:-0.311px">84a19dc444fae966ca174e83e708bdca&gt;::</span><span style="letter-spacing:-0.388px">operator()</span></span><span class="t d" style="left:409px;top:41px;"><span style="letter-spacing:0.125px">C:\Users\</span><span style="letter-spacing:0.084px">wolf\</span><span style="letter-spacing:0.012px">Desktop\</span><span style="letter-spacing:-0.077px">darkrl\src\</span><span style="letter-spacing:-0.189px">game\floor\</span><span style="letter-spacing:-0.161px">Floor.cpp:</span><span style="letter-spacing:-0.458px">650</span></span><span class="t d" style="left:1094px;top:41px;letter-spacing:-0.020px;">[DarkRL.exe]</span><span class="t d" style="left:5px;top:60px;letter-spacing:-0.219px;">inline</span><span class="t" style="left:51px;top:60px;"><span style="letter-spacing:0.034px">std::_</span><span style="letter-spacing:-0.161px">Mutex_</span><span style="letter-spacing:-0.037px">base::lock</span></span><span class="t d" style="left:409px;top:60px;"><span style="letter-spacing:-0.115px">C:\Program </span><span style="letter-spacing:-0.071px">Files (</span><span style="letter-spacing:-0.163px">x86)\</span><span style="letter-spacing:-0.011px">Microsoft </span><span style="letter-spacing:-0.036px">Visual </span><span style="letter-spacing:-0.107px">Studio\</span><span style="letter-spacing:-0.312px">2019\</span><span style="letter-spacing:-0.115px">Professional\</span><span style="letter-spacing:0.016px">VC\Tools\</span><span style="letter-spacing:-0.067px">MSVC\14.28.</span><span style="letter-spacing:-0.336px">29333\</span><span style="letter-spacing:-0.152px">include\</span><span style="letter-spacing:-0.145px">mutex:51</span></span><span class="t d" style="left:1094px;top:60px;letter-spacing:-0.020px;">[DarkRL.exe]</span><span class="t d" style="left:5px;top:79px;letter-spacing:-0.219px;">inline</span><span class="t" style="left:51px;top:79px;"><span style="letter-spacing:0.131px">std::</span><span style="letter-spacing:-0.388px">unique_</span><span style="letter-spacing:0.098px">lock&lt;std::</span><span style="letter-spacing:0.025px">mutex&gt;::</span><span style="letter-spacing:0.039px">lock</span></span><span class="t d" style="left:409px;top:79px;"><span style="letter-spacing:-0.115px">C:\Program </span><span style="letter-spacing:-0.071px">Files (</span><span style="letter-spacing:-0.163px">x86)\</span><span style="letter-spacing:-0.011px">Microsoft </span><span style="letter-spacing:-0.036px">Visual </span><span style="letter-spacing:-0.107px">Studio\</span><span style="letter-spacing:-0.312px">2019\</span><span style="letter-spacing:-0.115px">Professional\</span><span style="letter-spacing:0.016px">VC\Tools\</span><span style="letter-spacing:-0.067px">MSVC\14.28.</span><span style="letter-spacing:-0.336px">29333\</span><span style="letter-spacing:-0.152px">include\</span><span style="letter-spacing:-0.179px">mutex:192</span></span><span class="t d" style="left:1094px;top:79px;letter-spacing:-0.020px;">[DarkRL.exe]</span><span class="t" style="left:5px;top:98px;letter-spacing:-0.469px;">2</span><span class="t" style="left:51px;top:98px;"><span style="letter-spacing:0.023px">TaskDispatch::</span><span style="letter-spacing:0.047px">Sync</span></span><span class="t d" style="left:409px;top:98px;"><span style="letter-spacing:0.125px">C:\Users\</span><span style="letter-spacing:0.084px">wolf\</span><span style="letter-spacing:0.012px">Desktop\</span><span style="letter-spacing:-0.077px">darkrl\src\</span><span style="letter-spacing:0.005px">TaskDispatch.</span><span style="letter-spacing:-0.211px">cpp:86</span></span><span class="t d" style="left:1094px;top:98px;letter-spacing:-0.020px;">[DarkRL.exe]</span><span class="t" style="left:5px;top:117px;letter-spacing:-0.469px;">3</span><span class="t" style="left:51px;top:117px;"><span style="letter-spacing:-0.143px">Floor::</span><span style="letter-spacing:-0.181px">CalcLightNoLuminance</span></span><span class="t d" style="left:409px;top:117px;"><span style="letter-spacing:0.125px">C:\Users\</span><span style="letter-spacing:0.084px">wolf\</span><span style="letter-spacing:0.012px">Desktop\</span><span style="letter-spacing:-0.077px">darkrl\src\</span><span style="letter-spacing:-0.189px">game\floor\</span><span style="letter-spacing:-0.161px">Floor.cpp:</span><span style="letter-spacing:-0.458px">656</span></span><span class="t d" style="left:1094px;top:117px;letter-spacing:-0.020px;">[DarkRL.exe]</span><span class="t d" style="left:5px;top:136px;letter-spacing:-0.219px;">inline</span><span class="t" style="left:51px;top:136px;"><span style="letter-spacing:-0.161px">Game::</span><span style="letter-spacing:-0.320px">RenderFloor</span></span><span class="t d" style="left:409px;top:136px;"><span style="letter-spacing:0.125px">C:\Users\</span><span style="letter-spacing:0.084px">wolf\</span><span style="letter-spacing:0.012px">Desktop\</span><span style="letter-spacing:-0.077px">darkrl\src\</span><span style="letter-spacing:-0.250px">game\Game.</span><span style="letter-spacing:-0.246px">cpp:221</span></span><span class="t d" style="left:1094px;top:136px;letter-spacing:-0.020px;">[DarkRL.exe]</span><span class="t d" style="left:5px;top:155px;letter-spacing:-0.219px;">inline</span><span class="t" style="left:51px;top:155px;letter-spacing:-0.182px;">Game::Update</span><span class="t d" style="left:409px;top:155px;"><span style="letter-spacing:0.125px">C:\Users\</span><span style="letter-spacing:0.084px">wolf\</span><span style="letter-spacing:0.012px">Desktop\</span><span style="letter-spacing:-0.077px">darkrl\src\</span><span style="letter-spacing:-0.250px">game\Game.</span><span style="letter-spacing:-0.246px">cpp:283</span></span><span class="t d" style="left:1094px;top:155px;letter-spacing:-0.020px;">[DarkRL.exe]</span><span class="t" style="left:5px;top:174px;letter-spacing:-0.469px;">4</span><span class="t" style="left:51px;top:174px;letter-spacing:-0.118px;">Game::OnTick</span><span class="t d" style="left:409px;top:174px;"><span style="letter-spacing:0.125px">C:\Users\</span><span style="letter-spacing:0.084px">wolf\</span><span style="letter-spacing:0.012px">Desktop\</span><span style="letter-spacing:-0.077px">darkrl\src\</span><span style="letter-spacing:-0.250px">game\Game.</span><span style="letter-spacing:-0.246px">cpp:238</span></span><span class="t d" style="left:1094px;top:174px;letter-spacing:-0.020px;">[DarkRL.exe]</span><span class="t" style="left:5px;top:193px;letter-spacing:-0.469px;">5</span><span class="t" style="left:51px;top:193px;"><span style="letter-spacing:-0.168px">VideoGLBase::</span><span style="letter-spacing:0.105px">Tick</span></span><span class="t d" style="left:409px;top:193px;"><span style="letter-spacing:0.125px">C:\Users\</span><span style="letter-spacing:0.084px">wolf\</span><span style="letter-spacing:0.012px">Desktop\</span><span style="letter-spacing:-0.077px">darkrl\src\</span><span style="letter-spacing:-0.104px">video\gl\</span><span style="letter-spacing:-0.206px">VideoGLBase.</span><span style="letter-spacing:-0.246px">cpp:170</span></span><span class="t d" style="left:1094px;top:193px;letter-spacing:-0.020px;">[DarkRL.exe]</span><span class="t d" style="left:5px;top:212px;letter-spacing:-0.219px;">inline</span><span class="t" style="left:51px;top:212px;"><span style="letter-spacing:0.131px">std::</span><span style="letter-spacing:-0.182px">chrono::</span><span style="letter-spacing:-0.138px">steady_</span><span style="letter-spacing:0.041px">clock::now</span></span><span class="t d" style="left:409px;top:212px;"><span style="letter-spacing:-0.115px">C:\Program </span><span style="letter-spacing:-0.071px">Files (</span><span style="letter-spacing:-0.163px">x86)\</span><span style="letter-spacing:-0.011px">Microsoft </span><span style="letter-spacing:-0.036px">Visual </span><span style="letter-spacing:-0.107px">Studio\</span><span style="letter-spacing:-0.312px">2019\</span><span style="letter-spacing:-0.115px">Professional\</span><span style="letter-spacing:0.016px">VC\Tools\</span><span style="letter-spacing:-0.067px">MSVC\14.28.</span><span style="letter-spacing:-0.336px">29333\</span><span style="letter-spacing:-0.152px">include\</span><span style="letter-spacing:-0.309px">chrono:607</span></span><span class="t d" style="left:1094px;top:212px;letter-spacing:-0.020px;">[DarkRL.exe]</span><span class="t d" style="left:5px;top:231px;letter-spacing:-0.219px;">inline</span><span class="t" style="left:51px;top:231px;"><span style="letter-spacing:-0.107px">Video::</span><span style="letter-spacing:0.047px">GetTicksHiRes</span></span><span class="t d" style="left:409px;top:231px;"><span style="letter-spacing:0.125px">C:\Users\</span><span style="letter-spacing:0.084px">wolf\</span><span style="letter-spacing:0.012px">Desktop\</span><span style="letter-spacing:-0.077px">darkrl\src\</span><span style="letter-spacing:-0.130px">video\</span><span style="letter-spacing:-0.136px">Video.cpp:</span><span style="letter-spacing:-0.461px">29</span></span><span class="t d" style="left:1094px;top:231px;letter-spacing:-0.020px;">[DarkRL.exe]</span><span class="t" style="left:5px;top:250px;letter-spacing:-0.469px;">6</span><span class="t" style="left:51px;top:250px;"><span style="letter-spacing:-0.081px">Application::</span><span style="letter-spacing:-0.377px">InnerLoop</span></span><span class="t d" style="left:409px;top:250px;"><span style="letter-spacing:0.125px">C:\Users\</span><span style="letter-spacing:0.084px">wolf\</span><span style="letter-spacing:0.012px">Desktop\</span><span style="letter-spacing:-0.077px">darkrl\src\</span><span style="letter-spacing:-0.109px">Application.</span><span style="letter-spacing:-0.246px">cpp:214</span></span><span class="t d" style="left:1094px;top:250px;letter-spacing:-0.020px;">[DarkRL.exe]</span><span class="t d" style="left:5px;top:269px;letter-spacing:-0.219px;">inline</span><span class="t" style="left:51px;top:269px;"><span style="letter-spacing:0.034px">std::_</span><span style="letter-spacing:-0.062px">Atomic_</span><span style="letter-spacing:-0.193px">storage&lt;</span><span style="letter-spacing:-0.090px">bool,1&gt;::</span><span style="letter-spacing:-0.340px">load</span></span><span class="t d" style="left:409px;top:269px;"><span style="letter-spacing:-0.115px">C:\Program </span><span style="letter-spacing:-0.071px">Files (</span><span style="letter-spacing:-0.163px">x86)\</span><span style="letter-spacing:-0.011px">Microsoft </span><span style="letter-spacing:-0.036px">Visual </span><span style="letter-spacing:-0.107px">Studio\</span><span style="letter-spacing:-0.312px">2019\</span><span style="letter-spacing:-0.115px">Professional\</span><span style="letter-spacing:0.016px">VC\Tools\</span><span style="letter-spacing:-0.067px">MSVC\14.28.</span><span style="letter-spacing:-0.336px">29333\</span><span style="letter-spacing:-0.152px">include\</span><span style="letter-spacing:-0.158px">atomic:676</span></span><span class="t d" style="left:1094px;top:269px;letter-spacing:-0.020px;">[DarkRL.exe]</span><span class="t d" style="left:5px;top:288px;letter-spacing:-0.219px;">inline</span><span class="t" style="left:51px;top:288px;"><span style="letter-spacing:0.131px">std::</span><span style="letter-spacing:-0.047px">atomic&lt;</span><span style="letter-spacing:-0.089px">bool&gt;::</span><span style="letter-spacing:-0.297px">operator </span><span style="letter-spacing:-0.340px">bool</span></span><span class="t d" style="left:409px;top:288px;"><span style="letter-spacing:-0.115px">C:\Program </span><span style="letter-spacing:-0.071px">Files (</span><span style="letter-spacing:-0.163px">x86)\</span><span style="letter-spacing:-0.011px">Microsoft </span><span style="letter-spacing:-0.036px">Visual </span><span style="letter-spacing:-0.107px">Studio\</span><span style="letter-spacing:-0.312px">2019\</span><span style="letter-spacing:-0.115px">Professional\</span><span style="letter-spacing:0.016px">VC\Tools\</span><span style="letter-spacing:-0.067px">MSVC\14.28.</span><span style="letter-spacing:-0.336px">29333\</span><span style="letter-spacing:-0.152px">include\</span><span style="letter-spacing:-0.186px">atomic:2317</span></span><span class="t d" style="left:1094px;top:288px;letter-spacing:-0.020px;">[DarkRL.exe]</span><span class="t" style="left:5px;top:307px;letter-spacing:-0.469px;">7</span><span class="t" style="left:51px;top:307px;"><span style="letter-spacing:-0.081px">Application::</span><span style="letter-spacing:-0.198px">Run</span></span><span class="t d" style="left:409px;top:307px;"><span style="letter-spacing:0.125px">C:\Users\</span><span style="letter-spacing:0.084px">wolf\</span><span style="letter-spacing:0.012px">Desktop\</span><span style="letter-spacing:-0.077px">darkrl\src\</span><span style="letter-spacing:-0.109px">Application.</span><span style="letter-spacing:-0.246px">cpp:179</span></span><span class="t d" style="left:1094px;top:307px;letter-spacing:-0.020px;">[DarkRL.exe]</span><span class="t d" style="left:5px;top:326px;letter-spacing:-0.219px;">inline</span><span class="t" style="left:51px;top:326px;"><span style="letter-spacing:0.131px">std::</span><span style="letter-spacing:-0.291px">unique_ptr&lt;</span><span style="letter-spacing:-0.109px">Application,</span><span style="letter-spacing:0.131px">std::</span><span style="letter-spacing:-0.215px">default_</span><span style="letter-spacing:-0.194px">delete&lt;</span><span style="letter-spacing:-0.118px">Application&gt;</span></span><span class="t" style="left:51px;top:341px;letter-spacing:-0.012px;">&gt;::reset</span><span class="t d" style="left:409px;top:326px;"><span style="letter-spacing:-0.115px">C:\Program </span><span style="letter-spacing:-0.071px">Files (</span><span style="letter-spacing:-0.163px">x86)\</span><span style="letter-spacing:-0.011px">Microsoft </span><span style="letter-spacing:-0.036px">Visual </span><span style="letter-spacing:-0.107px">Studio\</span><span style="letter-spacing:-0.312px">2019\</span><span style="letter-spacing:-0.115px">Professional\</span><span style="letter-spacing:0.016px">VC\Tools\</span><span style="letter-spacing:-0.067px">MSVC\14.28.</span></span><span class="t d" style="left:409px;top:341px;"><span style="letter-spacing:-0.336px">29333\</span><span style="letter-spacing:-0.152px">include\</span><span style="letter-spacing:-0.270px">memory:2681</span></span><span class="t d" style="left:1094px;top:326px;letter-spacing:-0.020px;">[DarkRL.exe]</span><span class="t" style="left:5px;top:360px;letter-spacing:-0.469px;">8</span><span class="t" style="left:51px;top:360px;letter-spacing:-0.266px;">main</span><span class="t d" style="left:409px;top:360px;"><span style="letter-spacing:0.125px">C:\Users\</span><span style="letter-spacing:0.084px">wolf\</span><span style="letter-spacing:0.012px">Desktop\</span><span style="letter-spacing:-0.077px">darkrl\src\</span><span style="letter-spacing:-0.022px">EntryPointPosix.</span><span style="letter-spacing:-0.211px">cpp:72</span></span><span class="t d" style="left:1094px;top:360px;letter-spacing:-0.020px;">[DarkRL.exe]</span><span class="t d" style="left:5px;top:379px;letter-spacing:-0.219px;">inline</span><span class="t" style="left:51px;top:379px;letter-spacing:-0.207px;">invoke_main</span><span class="t d" style="left:409px;top:379px;"><span style="letter-spacing:-0.164px">d:\agent\_</span><span style="letter-spacing:-0.011px">work\63\s\</span><span style="letter-spacing:0.098px">src\</span><span style="letter-spacing:0.068px">vctools\</span><span style="letter-spacing:0.094px">crt\</span><span style="letter-spacing:-0.013px">vcstartup\</span><span style="letter-spacing:0.098px">src\</span><span style="letter-spacing:-0.090px">startup\</span><span style="letter-spacing:-0.200px">exe_common.</span><span style="letter-spacing:-0.217px">inl:102</span></span><span class="t d" style="left:1094px;top:379px;letter-spacing:-0.020px;">[DarkRL.exe]</span></div><span class="t" style="left:28px;top:529px;letter-spacing:-0.139px;">Messages</span><div class="c" style="left:6px;top:546px;width:864px;height:289px;"><span class="t" style="left:229px;top:12px;"><span style="letter-spacing:-0.074px">Filter </span><span style="letter-spacing:-0.139px">messages</span></span><span class="t" style="left:356px;top:12px;letter-spacing:-0.209px;">Clear</span><span class="t d" style="left:407px;top:12px;"><span style="letter-spacing:-0.089px">Total </span><span style="letter-spacing:-0.141px">message </span><span style="letter-spacing:-0.089px">count:</span></span><span class="t" style="left:541px;top:12px;letter-spacing:-0.312px;">1,063</span><span class="t d" style="left:589px;top:12px;"><span style="letter-spacing:-0.027px">Visible </span><span style="letter-spacing:-0.092px">messages:</span></span><span class="t" style="left:704px;top:12px;letter-spacing:-0.312px;">1,063</span><span class="t" style="left:795px;top:12px;"><span style="letter-spacing:-0.115px">Show frame </span><span style="letter-spacing:-0.203px">images</span></span><span class="t" style="left:48px;top:34px;"><span style="letter-spacing:-0.027px">Visible </span><span style="letter-spacing:-0.182px">threads:</span></span><span class="t d" style="left:146px;top:34px;letter-spacing:-0.464px;">(5)</span><div class="c" style="left:7px;top:56px;width:853px;height:226px;"><span class="t" style="left:0px;top:3px;letter-spacing:-0.199px;">Time</span><span class="t" style="left:94px;top:3px;letter-spacing:-0.414px;">Thread</span><span class="t" style="left:252px;top:3px;letter-spacing:-0.201px;">Message</span><span class="t" style="left:596px;top:3px;letter-spacing:0.089px;">Call stack</span><span class="t" style="left:0px;top:22px;letter-spacing:-0.286px;">606,049,398ns</span><div class="c" style="left:90px;top:19px;width:157px;height:19px;"><span class="t" style="left:27px;top:3px;letter-spacing:-0.254px;">Main thread</span><span class="t d" style="left:103px;top:3px;letter-spacing:-0.367px;">(31,596)</span></div><div class="c" style="left:248px;top:19px;width:343px;height:19px;"><span class="t" style="left:4px;top:3px;"><span style="letter-spacing:-0.238px">Opening /</span><span style="letter-spacing:-0.246px">shader/</span><span style="letter-spacing:-0.163px">sharpen.f </span><span style="letter-spacing:-0.273px">{cached}</span></span></div><div class="c" style="left:592px;top:19px;width:247px;height:19px;"><span class="t" style="left:32px;top:3px;"><span style="letter-spacing:-0.233px">DebugLog::</span><span style="letter-spacing:-0.201px">Message</span></span><span class="t" style="left:180px;top:3px;letter-spacing:-0.148px;">VFS::Open</span></div><span class="t" style="left:0px;top:41px;letter-spacing:-0.286px;">606,117,568ns</span><div class="c" style="left:90px;top:38px;width:157px;height:19px;"><span class="t" style="left:27px;top:3px;letter-spacing:-0.254px;">Main thread</span><span class="t d" style="left:103px;top:3px;letter-spacing:-0.367px;">(31,596)</span></div><div class="c" style="left:248px;top:38px;width:343px;height:19px;"><span class="t" style="left:4px;top:3px;"><span style="letter-spacing:-0.238px">Opening /</span><span style="letter-spacing:-0.246px">shader/</span><span style="letter-spacing:-0.062px">common.v </span><span style="letter-spacing:-0.273px">{cached}</span></span></div><div class="c" style="left:592px;top:38px;width:247px;height:19px;"><span class="t" style="left:32px;top:3px;"><span style="letter-spacing:-0.233px">DebugLog::</span><span style="letter-spacing:-0.201px">Message</span></span><span class="t" style="left:180px;top:3px;letter-spacing:-0.148px;">VFS::Open</span></div><span class="t" style="left:0px;top:60px;letter-spacing:-0.286px;">626,024,328ns</span><div class="c" style="left:90px;top:57px;width:157px;height:19px;"><span class="t" style="left:27px;top:3px;letter-spacing:-0.254px;">Main thread</span><span class="t d" style="left:103px;top:3px;letter-spacing:-0.367px;">(31,596)</span></div><div class="c" style="left:248px;top:57px;width:343px;height:19px;"><span class="t" style="left:4px;top:3px;"><span style="letter-spacing:0.012px">Network </span><span style="letter-spacing:-0.105px">initialized</span></span></div><div class="c" style="left:592px;top:57px;width:247px;height:19px;"><span class="t" style="left:32px;top:3px;"><span style="letter-spacing:-0.233px">DebugLog::</span><span style="letter-spacing:-0.201px">Message</span></span><span class="t" style="left:180px;top:3px;letter-spacing:-0.040px;">StartNetwork</span></div><span class="t" style="left:0px;top:79px;letter-spacing:-0.286px;">626,833,622ns</span><div class="c" style="left:90px;top:76px;width:157px;height:19px;"><span class="t" style="left:27px;top:3px;letter-spacing:-0.254px;">Main thread</span><span class="t d" style="left:103px;top:3px;letter-spacing:-0.367px;">(31,596)</span></div><div class="c" style="left:248px;top:76px;width:343px;height:19px;"><span class="t" style="left:4px;top:3px;letter-spacing:-0.066px;">Booting...</span></div><div class="c" style="left:592px;top:76px;width:247px;height:19px;"><span class="t" style="left:32px;top:3px;"><span style="letter-spacing:-0.233px">DebugLog::</span><span style="letter-spacing:-0.201px">Message</span></span><span class="t" style="left:180px;top:3px;"><span style="letter-spacing:-0.081px">Application::</span><span style="letter-spacing:-0.198px">Run</span></span></div><span class="t" style="left:0px;top:98px;letter-spacing:-0.286px;">627,313,190ns</span><div class="c" style="left:90px;top:95px;width:157px;height:19px;"><span class="t" style="left:27px;top:3px;letter-spacing:-0.100px;">RemoteView</span><span class="t d" style="left:110px;top:3px;letter-spacing:-0.367px;">(31,392)</span></div><div class="c" style="left:248px;top:95px;width:343px;height:19px;"><span class="t" style="left:4px;top:3px;"><span style="letter-spacing:-0.096px">Remote </span><span style="letter-spacing:0.091px">view </span><span style="letter-spacing:-0.141px">server </span><span style="letter-spacing:-0.132px">started (</span><span style="letter-spacing:-0.158px">protocol </span><span style="letter-spacing:-0.188px">version 1)</span></span></div><div class="c" style="left:592px;top:95px;width:247px;height:19px;"><span class="t" style="left:32px;top:3px;"><span style="letter-spacing:-0.233px">DebugLog::</span><span style="letter-spacing:-0.201px">Message</span></span><span class="t" style="left:180px;top:3px;"><span style="letter-spacing:-0.038px">RemoteView::</span><span style="letter-spacing:-0.414px">Thread</span></span></div><span class="t" style="left:0px;top:117px;letter-spacing:-0.286px;">627,380,356ns</span><div class="c" style="left:90px;top:114px;width:157px;height:19px;"><span class="t" style="left:27px;top:3px;letter-spacing:-0.379px;">Game</span><span class="t d" style="left:70px;top:3px;letter-spacing:-0.367px;">(36,704)</span></div><div class="c" style="left:248px;top:114px;width:343px;height:19px;"><span class="t" style="left:4px;top:3px;"><span style="letter-spacing:0.106px">VRAM </span><span style="letter-spacing:-0.163px">37x45: 13 </span><span style="letter-spacing:0.134px">+ 1 KB   </span><span style="letter-spacing:-0.248px">depth 1</span></span></div><div class="c" style="left:592px;top:114px;width:247px;height:19px;"><span class="t" style="left:32px;top:3px;"><span style="letter-spacing:-0.233px">DebugLog::</span><span style="letter-spacing:-0.201px">Message</span></span><span class="t" style="left:180px;top:3px;"><span style="letter-spacing:-0.166px">VideoMemory::</span><span style="letter-spacing:-0.013px">Alloc</span></span></div><span class="t" style="left:0px;top:136px;letter-spacing:-0.286px;">627,399,326ns</span><div class="c" style="left:90px;top:133px;width:157px;height:19px;"><span class="t" style="left:27px;top:3px;letter-spacing:-0.379px;">Game</span><span class="t d" style="left:70px;top:3px;letter-spacing:-0.367px;">(36,704)</span></div><div class="c" style="left:248px;top:133px;width:343px;height:19px;"><span class="t" style="left:4px;top:3px;"><span style="letter-spacing:0.106px">VRAM </span><span style="letter-spacing:-0.163px">43x45: 15 </span><span style="letter-spacing:0.134px">+ 1 KB   </span><span style="letter-spacing:-0.248px">depth 1</span></span></div><div class="c" style="left:592px;top:133px;width:247px;height:19px;"><span class="t" style="left:32px;top:3px;"><span style="letter-spacing:-0.233px">DebugLog::</span><span style="letter-spacing:-0.201px">Message</span></span><span class="t" style="left:180px;top:3px;"><span style="letter-spacing:-0.166px">VideoMemory::</span><span style="letter-spacing:-0.013px">Alloc</span></span></div><span class="t" style="left:0px;top:155px;letter-spacing:-0.286px;">627,411,606ns</span><div class="c" style="left:90px;top:152px;width:157px;height:19px;"><span class="t" style="left:27px;top:3px;letter-spacing:-0.379px;">Game</span><span class="t d" style="left:70px;top:3px;letter-spacing:-0.367px;">(36,704)</span></div><div class="c" style="left:248px;top:152px;width:343px;height:19px;"><span class="t" style="left:4px;top:3px;"><span style="letter-spacing:-0.238px">Opening /</span><span style="letter-spacing:-0.054px">forest.scrn</span></span></div><div class="c" style="left:592px;top:152px;width:247px;height:19px;"><span class="t" style="left:32px;top:3px;"><span style="letter-spacing:-0.233px">DebugLog::</span><span style="letter-spacing:-0.201px">Message</span></span><span class="t" style="left:180px;top:3px;letter-spacing:-0.148px;">VFS::Open</span></div><span class="t" style="left:0px;top:174px;letter-spacing:-0.286px;">627,558,996ns</span><div class="c" style="left:90px;top:171px;width:157px;height:19px;"><span class="t" style="left:27px;top:3px;letter-spacing:-0.379px;">Game</span><span class="t d" style="left:70px;top:3px;letter-spacing:-0.367px;">(36,704)</span></div><div class="c" style="left:248px;top:171px;width:343px;height:19px;"><span class="t" style="left:4px;top:3px;"><span style="letter-spacing:-0.238px">Opening /</span><span style="letter-spacing:-0.038px">forest.</span><span style="letter-spacing:-0.013px">scrn </span><span style="letter-spacing:-0.273px">{cached}</span></span></div><div class="c" style="left:592px;top:171px;width:247px;height:19px;"><span class="t" style="left:32px;top:3px;"><span style="letter-spacing:-0.233px">DebugLog::</span><span style="letter-spacing:-0.201px">Message</span></span><span class="t" style="left:180px;top:3px;letter-spacing:-0.148px;">VFS::Open</span></div><span class="t" style="left:0px;top:193px;letter-spacing:-0.286px;">627,667,736ns</span><div class="c" style="left:90px;top:190px;width:157px;height:19px;"><span class="t" style="left:27px;top:3px;letter-spacing:-0.379px;">Game</span><span class="t d" style="left:70px;top:3px;letter-spacing:-0.367px;">(36,704)</span></div><div class="c" style="left:248px;top:190px;width:343px;height:19px;"><span class="t" style="left:4px;top:3px;"><span style="letter-spacing:-0.238px">Opening /</span><span style="letter-spacing:-0.106px">meta/</span><span style="letter-spacing:-0.078px">release.txt</span></span></div><div class="c" style="left:592px;top:190px;width:247px;height:19px;"><span class="t" style="left:32px;top:3px;"><span style="letter-spacing:-0.233px">DebugLog::</span><span style="letter-spacing:-0.201px">Message</span></span><span class="t" style="left:180px;top:3px;letter-spacing:-0.148px;">VFS::Open</span></div><span class="t" style="left:0px;top:212px;letter-spacing:-0.286px;">627,831,246ns</span><div class="c" style="left:90px;top:209px;width:157px;height:19px;"><span class="t" style="left:27px;top:3px;letter-spacing:-0.379px;">Game</span><span class="t d" style="left:70px;top:3px;letter-spacing:-0.367px;">(36,704)</span></div><div class="c" style="left:248px;top:209px;width:343px;height:19px;"><span class="t" style="left:4px;top:3px;"><span style="letter-spacing:-0.165px">Intro menu </span><span style="letter-spacing:-0.378px">loaded</span></span></div><div class="c" style="left:592px;top:209px;width:246px;height:19px;"><span class="t" style="left:32px;top:3px;"><span style="letter-spacing:-0.233px">DebugLog::</span><span style="letter-spacing:-0.201px">Message</span></span><span class="t" style="left:180px;top:3px;"><span style="letter-spacing:-0.165px">IntroMenu::</span><span style="letter-spacing:-0.264px">IntroMenu</span></span></div></div></div><span class="t" style="left:901px;top:529px;letter-spacing:-0.051px;">Playback</span><div class="c" style="left:886px;top:554px;width:320px;height:180px;"><svg class="r" style="left:0px;top:0px;" width="320" height="180" viewBox="0 0 320 180"><text x="245" y="36.6" text-anchor="middle" font-family="DejaVu Sans, Liberation Sans, sans-serif" font-size="24" font-weight="bold" fill="#000" stroke="#b9b9a2" stroke-width=".7" textLength="136" lengthAdjust="spacingAndGlyphs">DarkRL</text><text x="243.5" y="51.5" text-anchor="middle" font-family="Liberation Mono, monospace" font-size="4.6" font-weight="bold" fill="#cfcfcf" textLength="40.0" lengthAdjust="spacingAndGlyphs">Created by</text><text x="243.5" y="59" text-anchor="middle" font-family="Liberation Mono, monospace" font-size="4.6" font-weight="bold" fill="#a6a68a" textLength="56.0" lengthAdjust="spacingAndGlyphs">Bartosz Taudul</text><text x="243.5" y="63.5" text-anchor="middle" font-family="Liberation Mono, monospace" font-size="4.6" font-weight="bold" fill="#d8d8c0" textLength="72.0" lengthAdjust="spacingAndGlyphs">wolf.pld@gmail.com</text><text x="243.5" y="107.5" text-anchor="middle" font-family="Liberation Mono, monospace" font-size="4.6" font-weight="bold" fill="#ffffff" textLength="88.0" lengthAdjust="spacingAndGlyphs">» [S]tart a new game «</text><text x="243.5" y="115" text-anchor="middle" font-family="Liberation Mono, monospace" font-size="4.6" font-weight="bold" fill="#a9a98c" textLength="80.0" lengthAdjust="spacingAndGlyphs">[R]eplay an old game</text><text x="245.5" y="123" text-anchor="middle" font-family="Liberation Mono, monospace" font-size="4.6" font-weight="bold" fill="#a9a98c" textLength="52.0" lengthAdjust="spacingAndGlyphs">Game [m]anual</text><text x="245.5" y="131" text-anchor="middle" font-family="Liberation Mono, monospace" font-size="4.6" font-weight="bold" fill="#a9a98c" textLength="60.0" lengthAdjust="spacingAndGlyphs">[V]ideo options</text><text x="245.5" y="139" text-anchor="middle" font-family="Liberation Mono, monospace" font-size="4.6" font-weight="bold" fill="#a9a98c" textLength="44.0" lengthAdjust="spacingAndGlyphs">[Q]uit game</text><text x="243.5" y="174.5" text-anchor="middle" font-family="Liberation Mono, monospace" font-size="4.6" font-weight="bold" fill="#5c5c5c" textLength="76.0" lengthAdjust="spacingAndGlyphs">Version: 15c455ee76</text><rect x="312.5" y="177.4" width="3" height=".8" fill="#aaa"/></svg></div><span class="t" style="left:995px;top:742px;letter-spacing:-0.458px;">441</span><span class="t" style="left:1130px;top:742px;letter-spacing:-0.271px;">Frame image</span><span class="t" style="left:993px;top:767px;letter-spacing:-0.273px;">1.00</span><span class="t" style="left:1130px;top:767px;letter-spacing:-0.118px;">Playback speed</span><span class="t" style="left:973px;top:792px;letter-spacing:-0.023px;">Play</span><span class="t" style="left:1045px;top:792px;letter-spacing:-0.056px;">Sync timeline</span><span class="t" style="left:1157px;top:792px;letter-spacing:-0.183px;">Zoom 2×</span><span class="t d" style="left:886px;top:814px;letter-spacing:-0.103px;">Timestamp:</span><span class="t" style="left:963px;top:814px;letter-spacing:-0.089px;">3.75 s</span><span class="t d" style="left:1015px;top:814px;letter-spacing:-0.245px;">Frame:</span><span class="t" style="left:1064px;top:814px;letter-spacing:-0.458px;">441</span><span class="t d" style="left:1101px;top:814px;letter-spacing:-0.005px;">Ratio:</span><span class="t" style="left:1144px;top:814px;letter-spacing:-0.273px;">1.93 bpp</span><span class="t" style="left:1258px;top:9px;letter-spacing:-0.016px;">CPU data</span><span class="t d" style="left:1243px;top:35px;"><span style="letter-spacing:-0.145px">Tracked </span><span style="letter-spacing:-0.182px">threads:</span></span><span class="t" style="left:1349px;top:35px;letter-spacing:-0.312px;">1,290</span><span class="t d" style="left:1389px;top:35px;"><span style="letter-spacing:-0.145px">Tracked </span><span style="letter-spacing:-0.083px">processes:</span></span><span class="t" style="left:1512px;top:35px;letter-spacing:-0.458px;">144</span><div class="c" style="left:1243px;top:57px;width:632px;height:771px;"><span class="t" style="left:0px;top:3px;letter-spacing:0.190px;">PID/TID</span><span class="t" style="left:108px;top:3px;letter-spacing:-0.191px;">Name</span><span class="t" style="left:260px;top:3px;letter-spacing:-0.167px;">Running time</span><span class="t" style="left:396px;top:3px;"><span style="letter-spacing:-0.209px">Running </span><span style="letter-spacing:-0.283px">regions</span></span><span class="t" style="left:512px;top:3px;letter-spacing:-0.062px;">CPU migrations</span><span class="t g" style="left:23px;top:22px;letter-spacing:-0.336px;">22,396</span><span class="t d" style="left:70px;top:22px;letter-spacing:-0.461px;">(49)</span><div class="c" style="left:104px;top:19px;width:151px;height:19px;"><span class="t g" style="left:4px;top:3px;letter-spacing:-0.080px;">DarkRL.exe</span></div><div class="c" style="left:260px;top:21px;width:126px;height:14px;"><span class="t g" style="left:22px;top:2px;"><span style="letter-spacing:-0.130px">14.33 s (</span><span style="letter-spacing:-0.277px">62.06%)</span></span></div><span class="t g" style="left:396px;top:22px;letter-spacing:-0.336px;">78,744</span><span class="t g" style="left:512px;top:22px;letter-spacing:-0.336px;">27,445</span><span class="t d" style="left:559px;top:22px;letter-spacing:-0.301px;">(34.85%)</span><span class="t" style="left:23px;top:41px;letter-spacing:-0.336px;">30,160</span><span class="t d" style="left:70px;top:41px;letter-spacing:-0.461px;">(84)</span><div class="c" style="left:104px;top:38px;width:151px;height:19px;"><span class="t" style="left:4px;top:3px;"><span style="letter-spacing:-0.208px">ScriptedSandbox64.</span><span style="letter-spacing:-0.208px">exe</span></span></div><div class="c" style="left:260px;top:40px;width:126px;height:14px;"><span class="t" style="left:22px;top:2px;"><span style="letter-spacing:-0.124px">2.51 s (10.</span><span style="letter-spacing:-0.324px">86%)</span></span></div><span class="t" style="left:396px;top:41px;letter-spacing:-0.336px;">26,181</span><span class="t" style="left:512px;top:41px;letter-spacing:-0.312px;">9,492</span><span class="t d" style="left:552px;top:41px;letter-spacing:-0.301px;">(36.26%)</span><span class="t" style="left:23px;top:60px;letter-spacing:-0.336px;">10,316</span><span class="t d" style="left:70px;top:60px;letter-spacing:-0.464px;">(9)</span><div class="c" style="left:104px;top:57px;width:151px;height:19px;"><span class="t" style="left:4px;top:3px;letter-spacing:-0.095px;">Tracy.exe</span></div><div class="c" style="left:260px;top:59px;width:126px;height:14px;"><span class="t" style="left:20px;top:2px;letter-spacing:-0.156px;">2.18 s (9.45%)</span></div><span class="t" style="left:396px;top:60px;letter-spacing:-0.336px;">11,058</span><span class="t" style="left:512px;top:60px;letter-spacing:-0.312px;">5,627</span><span class="t d" style="left:552px;top:60px;letter-spacing:-0.301px;">(50.89%)</span><span class="t" style="left:23px;top:79px;letter-spacing:-0.336px;">31,340</span><span class="t d" style="left:70px;top:79px;letter-spacing:-0.461px;">(75)</span><div class="c" style="left:104px;top:76px;width:151px;height:19px;"><span class="t" style="left:4px;top:3px;letter-spacing:-0.158px;">devenv.exe</span></div><div class="c" style="left:260px;top:78px;width:126px;height:14px;"><span class="t" style="left:19px;top:2px;letter-spacing:-0.156px;">1.91 s (8.26%)</span></div><span class="t" style="left:396px;top:79px;letter-spacing:-0.336px;">35,369</span><span class="t" style="left:512px;top:79px;letter-spacing:-0.336px;">14,567</span><span class="t d" style="left:559px;top:79px;letter-spacing:-0.301px;">(41.19%)</span><span class="t" style="left:23px;top:98px;letter-spacing:-0.336px;">34,412</span><span class="t d" style="left:70px;top:98px;letter-spacing:-0.461px;">(18)</span><div class="c" style="left:104px;top:95px;width:151px;height:19px;"><span class="t" style="left:4px;top:3px;"><span style="letter-spacing:-0.208px">ScriptedSandbox64.</span><span style="letter-spacing:-0.208px">exe</span></span></div><div class="c" style="left:260px;top:97px;width:126px;height:14px;"><span class="t" style="left:18px;top:2px;letter-spacing:-0.156px;">1.85 s (8.01%)</span></div><span class="t" style="left:396px;top:98px;letter-spacing:-0.336px;">18,276</span><span class="t" style="left:512px;top:98px;letter-spacing:-0.312px;">7,351</span><span class="t d" style="left:552px;top:98px;letter-spacing:-0.301px;">(40.22%)</span><span class="t" style="left:23px;top:117px;letter-spacing:-0.312px;">2,492</span><span class="t d" style="left:63px;top:117px;letter-spacing:-0.464px;">(7)</span><div class="c" style="left:104px;top:114px;width:151px;height:19px;"><span class="t" style="left:4px;top:3px;letter-spacing:-0.078px;">firefox.exe</span></div><div class="c" style="left:260px;top:116px;width:126px;height:14px;"><span class="t" style="left:18px;top:2px;letter-spacing:-0.156px;">1.71 s (7.42%)</span></div><span class="t" style="left:396px;top:117px;letter-spacing:-0.336px;">24,022</span><span class="t" style="left:512px;top:117px;letter-spacing:-0.336px;">11,143</span><span class="t d" style="left:559px;top:117px;letter-spacing:-0.301px;">(46.39%)</span><span class="t" style="left:23px;top:136px;letter-spacing:-0.312px;">7,144</span><span class="t d" style="left:63px;top:136px;letter-spacing:-0.464px;">(8)</span><div class="c" style="left:104px;top:133px;width:151px;height:19px;"><span class="t" style="left:4px;top:3px;letter-spacing:-0.094px;">dwm.exe</span></div><div class="c" style="left:260px;top:135px;width:126px;height:14px;"><span class="t" style="left:17px;top:2px;letter-spacing:-0.156px;">1.66 s (7.18%)</span></div><span class="t" style="left:396px;top:136px;letter-spacing:-0.336px;">14,291</span><span class="t" style="left:512px;top:136px;letter-spacing:-0.312px;">8,214</span><span class="t d" style="left:552px;top:136px;letter-spacing:-0.301px;">(57.48%)</span><span class="t" style="left:21px;top:159px;letter-spacing:-0.336px;">10,512</span><div class="c" style="left:104px;top:156px;width:151px;height:19px;"><span class="t" style="left:4px;top:3px;"><span style="letter-spacing:0.191px">DWM </span><span style="letter-spacing:-0.116px">Compositor </span><span style="letter-spacing:-0.414px">Thread</span></span></div><div class="c" style="left:260px;top:158px;width:126px;height:14px;"><span class="t" style="left:17px;top:2px;letter-spacing:-0.156px;">1.53 s (6.63%)</span></div><span class="t" style="left:396px;top:159px;letter-spacing:-0.312px;">4,097</span><span class="t" style="left:512px;top:159px;letter-spacing:-0.312px;">1,160</span><span class="t d" style="left:552px;top:159px;letter-spacing:-0.301px;">(28.31%)</span><span class="t" style="left:21px;top:178px;letter-spacing:-0.336px;">13,132</span><div class="c" style="left:104px;top:175px;width:151px;height:19px;"><span class="t" style="left:4px;top:3px;"><span style="letter-spacing:0.027px">uDWM Event </span><span style="letter-spacing:-0.414px">Thread</span></span></div><div class="c" style="left:260px;top:177px;width:126px;height:14px;"><span class="t" style="left:9px;top:2px;"><span style="letter-spacing:-0.134px">68.29 ms (</span><span style="letter-spacing:-0.247px">0.30%)</span></span></div><span class="t" style="left:396px;top:178px;letter-spacing:-0.312px;">4,671</span><span class="t" style="left:512px;top:178px;letter-spacing:-0.312px;">3,758</span><span class="t d" style="left:552px;top:178px;letter-spacing:-0.301px;">(80.45%)</span><span class="t" style="left:21px;top:197px;letter-spacing:-0.312px;">4,092</span><div class="c" style="left:104px;top:194px;width:151px;height:19px;"><span class="t" style="left:4px;top:3px;"><span style="letter-spacing:0.121px">DWM LPC </span><span style="letter-spacing:-0.254px">Port Thread</span></span></div><div class="c" style="left:260px;top:196px;width:126px;height:14px;"><span class="t" style="left:9px;top:2px;"><span style="letter-spacing:-0.134px">29.16 ms (</span><span style="letter-spacing:-0.247px">0.13%)</span></span></div><span class="t" style="left:396px;top:197px;letter-spacing:-0.312px;">1,310</span><span class="t" style="left:512px;top:197px;letter-spacing:-0.458px;">983</span><span class="t d" style="left:541px;top:197px;letter-spacing:-0.301px;">(75.04%)</span><span class="t" style="left:21px;top:216px;letter-spacing:-0.312px;">3,748</span><div class="c" style="left:104px;top:213px;width:151px;height:19px;"><span class="t" style="left:4px;top:3px;"><span style="letter-spacing:-0.022px">DWM Token </span><span style="letter-spacing:-0.414px">Thread</span></span></div><div class="c" style="left:260px;top:215px;width:126px;height:14px;"><span class="t" style="left:9px;top:2px;"><span style="letter-spacing:-0.134px">23.37 ms (</span><span style="letter-spacing:-0.247px">0.10%)</span></span></div><span class="t" style="left:396px;top:216px;letter-spacing:-0.312px;">4,035</span><span class="t" style="left:512px;top:216px;letter-spacing:-0.312px;">2,229</span><span class="t d" style="left:552px;top:216px;letter-spacing:-0.301px;">(55.24%)</span><span class="t" style="left:21px;top:235px;letter-spacing:-0.336px;">24,964</span><div class="c" style="left:104px;top:232px;width:151px;height:19px;"><span class="t" style="left:4px;top:3px;"><span style="letter-spacing:0.006px">DWM Master </span><span style="letter-spacing:-0.091px">Input </span><span style="letter-spacing:-0.414px">Thread</span></span></div><div class="c" style="left:260px;top:234px;width:126px;height:14px;"><span class="t" style="left:9px;top:2px;"><span style="letter-spacing:-0.097px">5.03 ms (0.</span><span style="letter-spacing:-0.324px">02%)</span></span></div><span class="t" style="left:396px;top:235px;letter-spacing:-0.458px;">131</span><span class="t" style="left:512px;top:235px;letter-spacing:-0.461px;">55</span><span class="t d" style="left:534px;top:235px;letter-spacing:-0.301px;">(41.98%)</span><span class="t" style="left:21px;top:254px;letter-spacing:-0.336px;">20,508</span><div class="c" style="left:104px;top:251px;width:151px;height:19px;"><span class="t" style="left:4px;top:3px;letter-spacing:-0.082px;">ntdll.dll</span></div><div class="c" style="left:260px;top:253px;width:126px;height:14px;"><span class="t" style="left:9px;top:2px;"><span style="letter-spacing:-0.097px">1.01 ms (0.</span><span style="letter-spacing:-0.324px">00%)</span></span></div><span class="t" style="left:396px;top:254px;letter-spacing:-0.461px;">40</span><span class="t" style="left:512px;top:254px;letter-spacing:-0.461px;">25</span><span class="t d" style="left:534px;top:254px;letter-spacing:-0.301px;">(62.50%)</span><span class="t" style="left:21px;top:273px;letter-spacing:-0.312px;">3,564</span><div class="c" style="left:104px;top:270px;width:151px;height:19px;"><span class="t" style="left:4px;top:3px;"><span style="letter-spacing:-0.206px">GameInput </span><span style="letter-spacing:-0.208px">server</span></span></div><div class="c" style="left:260px;top:272px;width:126px;height:14px;"><span class="t" style="left:9px;top:2px;"><span style="letter-spacing:-0.163px">69.68 us (</span><span style="letter-spacing:-0.247px">0.00%)</span></span></div><span class="t" style="left:396px;top:273px;letter-spacing:-0.469px;">6</span><span class="t" style="left:512px;top:273px;letter-spacing:-0.469px;">4</span><span class="t d" style="left:527px;top:273px;letter-spacing:-0.301px;">(66.67%)</span><span class="t" style="left:21px;top:292px;letter-spacing:-0.336px;">13,732</span><div class="c" style="left:104px;top:289px;width:151px;height:19px;"><span class="t" style="left:4px;top:3px;letter-spacing:-0.082px;">ntdll.dll</span></div><div class="c" style="left:260px;top:291px;width:126px;height:14px;"><span class="t" style="left:9px;top:2px;"><span style="letter-spacing:-0.124px">5.84 us (0.</span><span style="letter-spacing:-0.324px">00%)</span></span></div><span class="t" style="left:396px;top:292px;letter-spacing:-0.469px;">1</span><span class="t" style="left:512px;top:292px;letter-spacing:-0.469px;">0</span><span class="t d" style="left:527px;top:292px;letter-spacing:-0.279px;">(0.00%)</span><span class="t" style="left:23px;top:315px;letter-spacing:-0.469px;">4</span><span class="t d" style="left:38px;top:315px;letter-spacing:-0.459px;">(126)</span><div class="c" style="left:104px;top:312px;width:151px;height:19px;"><span class="t" style="left:4px;top:3px;letter-spacing:0.049px;">System</span></div><div class="c" style="left:260px;top:314px;width:126px;height:14px;"><span class="t" style="left:17px;top:2px;letter-spacing:-0.156px;">1.55 s (6.70%)</span></div><span class="t" style="left:396px;top:315px;letter-spacing:-0.336px;">69,294</span><span class="t" style="left:512px;top:315px;letter-spacing:-0.336px;">34,400</span><span class="t d" style="left:559px;top:315px;letter-spacing:-0.301px;">(49.64%)</span><span class="t" style="left:23px;top:334px;letter-spacing:-0.336px;">35,812</span><span class="t d" style="left:70px;top:334px;letter-spacing:-0.461px;">(88)</span><div class="c" style="left:104px;top:331px;width:151px;height:19px;"><span class="t" style="left:4px;top:3px;"><span style="letter-spacing:-0.094px">ServiceHub.</span><span style="letter-spacing:-0.121px">DataWarehouseHost.</span><span style="letter-spacing:-0.208px">exe</span></span></div><div class="c" style="left:260px;top:333px;width:126px;height:14px;"><span class="t" style="left:11px;top:2px;"><span style="letter-spacing:-0.163px">670.41 ms (</span><span style="letter-spacing:-0.247px">2.90%)</span></span></div><span class="t" style="left:396px;top:334px;letter-spacing:-0.312px;">5,621</span><span class="t" style="left:512px;top:334px;letter-spacing:-0.312px;">2,889</span><span class="t d" style="left:552px;top:334px;letter-spacing:-0.301px;">(51.40%)</span><span class="t" style="left:23px;top:353px;letter-spacing:-0.336px;">30,456</span><span class="t d" style="left:70px;top:353px;letter-spacing:-0.461px;">(25)</span><div class="c" style="left:104px;top:350px;width:151px;height:19px;"><span class="t" style="left:4px;top:3px;letter-spacing:-0.095px;">steam.exe</span></div><div class="c" style="left:260px;top:352px;width:126px;height:14px;"><span class="t" style="left:11px;top:2px;"><span style="letter-spacing:-0.163px">643.61 ms (</span><span style="letter-spacing:-0.247px">2.79%)</span></span></div><span class="t" style="left:396px;top:353px;letter-spacing:-0.336px;">34,967</span><span class="t" style="left:512px;top:353px;letter-spacing:-0.336px;">18,948</span><span class="t d" style="left:559px;top:353px;letter-spacing:-0.301px;">(54.19%)</span><span class="t" style="left:23px;top:372px;letter-spacing:-0.336px;">11,152</span><span class="t d" style="left:70px;top:372px;letter-spacing:-0.461px;">(12)</span><div class="c" style="left:104px;top:369px;width:151px;height:19px;"><span class="t" style="left:4px;top:3px;letter-spacing:-0.078px;">firefox.exe</span></div><div class="c" style="left:260px;top:371px;width:126px;height:14px;"><span class="t" style="left:11px;top:2px;"><span style="letter-spacing:-0.163px">632.15 ms (</span><span style="letter-spacing:-0.247px">2.74%)</span></span></div><span class="t" style="left:396px;top:372px;letter-spacing:-0.336px;">41,171</span><span class="t" style="left:512px;top:372px;letter-spacing:-0.336px;">21,316</span><span class="t d" style="left:559px;top:372px;letter-spacing:-0.301px;">(51.77%)</span><span class="t" style="left:23px;top:391px;letter-spacing:-0.336px;">14,984</span><span class="t d" style="left:70px;top:391px;letter-spacing:-0.461px;">(50)</span><div class="c" style="left:104px;top:388px;width:151px;height:19px;"><span class="t" style="left:4px;top:3px;letter-spacing:-0.158px;">devenv.exe</span></div><div class="c" style="left:260px;top:390px;width:126px;height:14px;"><span class="t" style="left:11px;top:2px;"><span style="letter-spacing:-0.163px">584.69 ms (</span><span style="letter-spacing:-0.247px">2.53%)</span></span></div><span class="t" style="left:396px;top:391px;letter-spacing:-0.312px;">6,917</span><span class="t" style="left:512px;top:391px;letter-spacing:-0.312px;">4,015</span><span class="t d" style="left:552px;top:391px;letter-spacing:-0.301px;">(58.05%)</span><span class="t" style="left:23px;top:410px;letter-spacing:-0.336px;">15,652</span><span class="t d" style="left:70px;top:410px;letter-spacing:-0.461px;">(43)</span><div class="c" style="left:104px;top:407px;width:151px;height:19px;"><span class="t" style="left:4px;top:3px;"><span style="letter-spacing:-0.094px">ServiceHub.</span><span style="letter-spacing:-0.121px">DataWarehouseHost.</span><span style="letter-spacing:-0.208px">exe</span></span></div><div class="c" style="left:260px;top:409px;width:126px;height:14px;"><span class="t" style="left:11px;top:2px;"><span style="letter-spacing:-0.163px">580.22 ms (</span><span style="letter-spacing:-0.247px">2.51%)</span></span></div><span class="t" style="left:396px;top:410px;letter-spacing:-0.312px;">5,128</span><span class="t" style="left:512px;top:410px;letter-spacing:-0.312px;">3,035</span><span class="t d" style="left:552px;top:410px;letter-spacing:-0.301px;">(59.18%)</span><span class="t" style="left:23px;top:429px;letter-spacing:-0.336px;">11,820</span><span class="t d" style="left:70px;top:429px;letter-spacing:-0.464px;">(9)</span><div class="c" style="left:104px;top:426px;width:151px;height:19px;"><span class="t" style="left:4px;top:3px;letter-spacing:-0.078px;">firefox.exe</span></div><div class="c" style="left:260px;top:428px;width:126px;height:14px;"><span class="t" style="left:10px;top:2px;"><span style="letter-spacing:-0.163px">346.58 ms (</span><span style="letter-spacing:-0.247px">1.50%)</span></span></div><span class="t" style="left:396px;top:429px;letter-spacing:-0.336px;">21,886</span><span class="t" style="left:512px;top:429px;letter-spacing:-0.336px;">17,446</span><span class="t d" style="left:559px;top:429px;letter-spacing:-0.301px;">(79.71%)</span><span class="t" style="left:23px;top:448px;letter-spacing:-0.336px;">11,828</span><span class="t d" style="left:70px;top:448px;letter-spacing:-0.464px;">(6)</span><div class="c" style="left:104px;top:445px;width:151px;height:19px;"><span class="t" style="left:4px;top:3px;letter-spacing:-0.078px;">firefox.exe</span></div><div class="c" style="left:260px;top:447px;width:126px;height:14px;"><span class="t" style="left:10px;top:2px;"><span style="letter-spacing:-0.163px">291.26 ms (</span><span style="letter-spacing:-0.247px">1.26%)</span></span></div><span class="t" style="left:396px;top:448px;letter-spacing:-0.336px;">16,884</span><span class="t" style="left:512px;top:448px;letter-spacing:-0.336px;">12,577</span><span class="t d" style="left:559px;top:448px;letter-spacing:-0.301px;">(74.49%)</span><span class="t" style="left:23px;top:467px;letter-spacing:-0.336px;">29,388</span><span class="t d" style="left:70px;top:467px;letter-spacing:-0.461px;">(77)</span><div class="c" style="left:104px;top:464px;width:151px;height:19px;"><span class="t" style="left:4px;top:3px;"><span style="letter-spacing:-0.094px">ServiceHub.</span><span style="letter-spacing:0.020px">SettingsHost.</span><span style="letter-spacing:-0.208px">exe</span></span></div><div class="c" style="left:260px;top:466px;width:126px;height:14px;"><span class="t" style="left:10px;top:2px;"><span style="letter-spacing:-0.163px">273.15 ms (</span><span style="letter-spacing:-0.247px">1.18%)</span></span></div><span class="t" style="left:396px;top:467px;letter-spacing:-0.458px;">604</span><span class="t" style="left:512px;top:467px;letter-spacing:-0.458px;">283</span><span class="t d" style="left:541px;top:467px;letter-spacing:-0.301px;">(46.85%)</span><span class="t" style="left:23px;top:486px;letter-spacing:-0.336px;">13,044</span><span class="t d" style="left:70px;top:486px;letter-spacing:-0.461px;">(10)</span><div class="c" style="left:104px;top:483px;width:151px;height:19px;"><span class="t" style="left:4px;top:3px;"><span style="letter-spacing:-0.169px">StandardCollector.</span><span style="letter-spacing:-0.095px">Service.exe</span></span></div><div class="c" style="left:260px;top:485px;width:126px;height:14px;"><span class="t" style="left:10px;top:2px;"><span style="letter-spacing:-0.163px">242.48 ms (</span><span style="letter-spacing:-0.247px">1.05%)</span></span></div><span class="t" style="left:396px;top:486px;letter-spacing:-0.336px;">24,384</span><span class="t" style="left:512px;top:486px;letter-spacing:-0.336px;">11,978</span><span class="t d" style="left:559px;top:486px;letter-spacing:-0.301px;">(49.12%)</span><span class="t" style="left:23px;top:505px;letter-spacing:-0.336px;">12,692</span><span class="t d" style="left:70px;top:505px;letter-spacing:-0.464px;">(9)</span><div class="c" style="left:104px;top:502px;width:151px;height:19px;"><span class="t" style="left:4px;top:3px;letter-spacing:-0.078px;">firefox.exe</span></div><div class="c" style="left:260px;top:504px;width:126px;height:14px;"><span class="t" style="left:10px;top:2px;"><span style="letter-spacing:-0.163px">231.76 ms (</span><span style="letter-spacing:-0.247px">1.00%)</span></span></div><span class="t" style="left:396px;top:505px;letter-spacing:-0.336px;">15,612</span><span class="t" style="left:512px;top:505px;letter-spacing:-0.336px;">13,552</span><span class="t d" style="left:559px;top:505px;letter-spacing:-0.301px;">(86.81%)</span><span class="t" style="left:23px;top:524px;letter-spacing:-0.312px;">4,768</span><span class="t d" style="left:63px;top:524px;letter-spacing:-0.464px;">(7)</span><div class="c" style="left:104px;top:521px;width:151px;height:19px;"><span class="t" style="left:4px;top:3px;letter-spacing:-0.078px;">firefox.exe</span></div><div class="c" style="left:260px;top:523px;width:126px;height:14px;"><span class="t" style="left:10px;top:2px;"><span style="letter-spacing:-0.163px">187.54 ms (</span><span style="letter-spacing:-0.247px">0.81%)</span></span></div><span class="t" style="left:396px;top:524px;letter-spacing:-0.336px;">14,878</span><span class="t" style="left:512px;top:524px;letter-spacing:-0.336px;">13,008</span><span class="t d" style="left:559px;top:524px;letter-spacing:-0.301px;">(87.43%)</span><span class="t" style="left:23px;top:543px;letter-spacing:-0.336px;">16,464</span><span class="t d" style="left:70px;top:543px;letter-spacing:-0.464px;">(7)</span><div class="c" style="left:104px;top:540px;width:151px;height:19px;"><span class="t" style="left:4px;top:3px;letter-spacing:-0.078px;">firefox.exe</span></div><div class="c" style="left:260px;top:542px;width:126px;height:14px;"><span class="t" style="left:10px;top:2px;letter-spacing:-0.189px;">187 ms (0.81%)</span></div><span class="t" style="left:396px;top:543px;letter-spacing:-0.336px;">15,494</span><span class="t" style="left:512px;top:543px;letter-spacing:-0.336px;">13,017</span><span class="t d" style="left:559px;top:543px;letter-spacing:-0.301px;">(84.01%)</span><span class="t" style="left:23px;top:562px;letter-spacing:-0.336px;">23,348</span><span class="t d" style="left:70px;top:562px;letter-spacing:-0.459px;">(106)</span><div class="c" style="left:104px;top:559px;width:151px;height:19px;"><span class="t" style="left:4px;top:3px;"><span style="letter-spacing:-0.094px">ServiceHub.</span><span style="letter-spacing:0.020px">SettingsHost.</span><span style="letter-spacing:-0.208px">exe</span></span></div><div class="c" style="left:260px;top:561px;width:126px;height:14px;"><span class="t" style="left:9px;top:2px;"><span style="letter-spacing:-0.163px">158.08 ms (</span><span style="letter-spacing:-0.247px">0.68%)</span></span></div><span class="t" style="left:396px;top:562px;letter-spacing:-0.458px;">787</span><span class="t" style="left:512px;top:562px;letter-spacing:-0.458px;">465</span><span class="t d" style="left:541px;top:562px;letter-spacing:-0.301px;">(59.09%)</span><span class="t" style="left:23px;top:581px;letter-spacing:-0.336px;">13,048</span><span class="t d" style="left:70px;top:581px;letter-spacing:-0.464px;">(7)</span><div class="c" style="left:104px;top:578px;width:151px;height:19px;"><span class="t" style="left:4px;top:3px;letter-spacing:-0.078px;">firefox.exe</span></div><div class="c" style="left:260px;top:580px;width:126px;height:14px;"><span class="t" style="left:9px;top:2px;"><span style="letter-spacing:-0.163px">154.28 ms (</span><span style="letter-spacing:-0.247px">0.67%)</span></span></div><span class="t" style="left:396px;top:581px;letter-spacing:-0.312px;">9,397</span><span class="t" style="left:512px;top:581px;letter-spacing:-0.312px;">8,058</span><span class="t d" style="left:552px;top:581px;letter-spacing:-0.301px;">(85.75%)</span><span class="t" style="left:23px;top:600px;letter-spacing:-0.336px;">15,004</span><span class="t d" style="left:70px;top:600px;letter-spacing:-0.464px;">(8)</span><div class="c" style="left:104px;top:597px;width:151px;height:19px;"><span class="t" style="left:4px;top:3px;letter-spacing:-0.205px;">chrome.exe</span></div><div class="c" style="left:260px;top:599px;width:126px;height:14px;"><span class="t" style="left:9px;top:2px;letter-spacing:-0.189px;">147 ms (0.64%)</span></div><span class="t" style="left:396px;top:600px;letter-spacing:-0.312px;">7,161</span><span class="t" style="left:512px;top:600px;letter-spacing:-0.312px;">3,375</span><span class="t d" style="left:552px;top:600px;letter-spacing:-0.301px;">(47.13%)</span><span class="t" style="left:23px;top:619px;letter-spacing:-0.336px;">27,536</span><span class="t d" style="left:70px;top:619px;letter-spacing:-0.464px;">(7)</span><div class="c" style="left:104px;top:616px;width:151px;height:19px;"><span class="t" style="left:4px;top:3px;letter-spacing:-0.064px;">msvsmon.exe</span></div><div class="c" style="left:260px;top:618px;width:126px;height:14px;"><span class="t" style="left:9px;top:2px;"><span style="letter-spacing:-0.163px">133.45 ms (</span><span style="letter-spacing:-0.247px">0.58%)</span></span></div><span class="t" style="left:396px;top:619px;letter-spacing:-0.312px;">5,163</span><span class="t" style="left:512px;top:619px;letter-spacing:-0.312px;">1,644</span><span class="t d" style="left:552px;top:619px;letter-spacing:-0.301px;">(31.84%)</span><span class="t" style="left:23px;top:638px;letter-spacing:-0.312px;">8,080</span><span class="t d" style="left:63px;top:638px;letter-spacing:-0.461px;">(20)</span><div class="c" style="left:104px;top:635px;width:151px;height:19px;"><span class="t" style="left:4px;top:3px;letter-spacing:-0.232px;">explorer.exe</span></div><div class="c" style="left:260px;top:637px;width:126px;height:14px;"><span class="t" style="left:9px;top:2px;"><span style="letter-spacing:-0.163px">105.66 ms (</span><span style="letter-spacing:-0.247px">0.46%)</span></span></div><span class="t" style="left:396px;top:638px;letter-spacing:-0.312px;">4,896</span><span class="t" style="left:512px;top:638px;letter-spacing:-0.312px;">1,703</span><span class="t d" style="left:552px;top:638px;letter-spacing:-0.301px;">(34.78%)</span><span class="t" style="left:23px;top:657px;letter-spacing:-0.336px;">18,444</span><span class="t d" style="left:70px;top:657px;letter-spacing:-0.464px;">(6)</span><div class="c" style="left:104px;top:654px;width:151px;height:19px;"><span class="t" style="left:4px;top:3px;letter-spacing:-0.078px;">firefox.exe</span></div><div class="c" style="left:260px;top:656px;width:126px;height:14px;"><span class="t" style="left:9px;top:2px;"><span style="letter-spacing:-0.134px">104.2 ms (</span><span style="letter-spacing:-0.247px">0.45%)</span></span></div><span class="t" style="left:396px;top:657px;letter-spacing:-0.312px;">8,172</span><span class="t" style="left:512px;top:657px;letter-spacing:-0.312px;">6,451</span><span class="t d" style="left:552px;top:657px;letter-spacing:-0.301px;">(78.94%)</span><span class="t" style="left:23px;top:676px;letter-spacing:-0.336px;">14,784</span><span class="t d" style="left:70px;top:676px;letter-spacing:-0.464px;">(5)</span><div class="c" style="left:104px;top:673px;width:151px;height:19px;"><span class="t" style="left:4px;top:3px;letter-spacing:-0.078px;">firefox.exe</span></div><div class="c" style="left:260px;top:675px;width:126px;height:14px;"><span class="t" style="left:9px;top:2px;"><span style="letter-spacing:-0.134px">97.95 ms (</span><span style="letter-spacing:-0.247px">0.42%)</span></span></div><span class="t" style="left:396px;top:676px;letter-spacing:-0.312px;">6,731</span><span class="t" style="left:512px;top:676px;letter-spacing:-0.312px;">6,028</span><span class="t d" style="left:552px;top:676px;letter-spacing:-0.301px;">(89.56%)</span><span class="t" style="left:23px;top:695px;letter-spacing:-0.336px;">12,016</span><span class="t d" style="left:70px;top:695px;letter-spacing:-0.464px;">(2)</span><div class="c" style="left:104px;top:692px;width:151px;height:19px;"><span class="t" style="left:4px;top:3px;letter-spacing:-0.078px;">firefox.exe</span></div><div class="c" style="left:260px;top:694px;width:126px;height:14px;"><span class="t" style="left:9px;top:2px;"><span style="letter-spacing:-0.134px">84.89 ms (</span><span style="letter-spacing:-0.247px">0.37%)</span></span></div><span class="t" style="left:396px;top:695px;letter-spacing:-0.312px;">6,576</span><span class="t" style="left:512px;top:695px;letter-spacing:-0.312px;">6,012</span><span class="t d" style="left:552px;top:695px;letter-spacing:-0.301px;">(91.42%)</span><span class="t" style="left:23px;top:714px;letter-spacing:-0.312px;">1,488</span><span class="t d" style="left:63px;top:714px;letter-spacing:-0.461px;">(10)</span><div class="c" style="left:104px;top:711px;width:151px;height:19px;"><span class="t" style="left:4px;top:3px;letter-spacing:0.042px;">csrss.exe</span></div><div class="c" style="left:260px;top:713px;width:126px;height:14px;"><span class="t" style="left:9px;top:2px;"><span style="letter-spacing:-0.134px">83.74 ms (</span><span style="letter-spacing:-0.247px">0.36%)</span></span></div><span class="t" style="left:396px;top:714px;letter-spacing:-0.312px;">3,657</span><span class="t" style="left:512px;top:714px;letter-spacing:-0.312px;">2,002</span><span class="t d" style="left:552px;top:714px;letter-spacing:-0.301px;">(54.74%)</span><span class="t" style="left:23px;top:733px;letter-spacing:-0.312px;">4,872</span><span class="t d" style="left:63px;top:733px;letter-spacing:-0.464px;">(9)</span><div class="c" style="left:104px;top:730px;width:151px;height:19px;"><span class="t" style="left:4px;top:3px;letter-spacing:-0.153px;">MsMpEng.exe</span></div><div class="c" style="left:260px;top:732px;width:126px;height:14px;"><span class="t" style="left:9px;top:2px;"><span style="letter-spacing:-0.134px">70.22 ms (</span><span style="letter-spacing:-0.247px">0.30%)</span></span></div><span class="t" style="left:396px;top:733px;letter-spacing:-0.458px;">573</span><span class="t" style="left:512px;top:733px;letter-spacing:-0.458px;">201</span><span class="t d" style="left:541px;top:733px;letter-spacing:-0.301px;">(35.08%)</span><span class="t" style="left:23px;top:752px;letter-spacing:-0.336px;">27,696</span><span class="t d" style="left:70px;top:752px;letter-spacing:-0.461px;">(17)</span><div class="c" style="left:104px;top:749px;width:151px;height:19px;"><span class="t" style="left:4px;top:3px;"><span style="letter-spacing:-0.011px">Microsoft.</span><span style="letter-spacing:-0.094px">ServiceHub.</span><span style="letter-spacing:-0.168px">Controller.</span><span style="letter-spacing:-0.208px">exe</span></span></div><div class="c" style="left:260px;top:751px;width:126px;height:14px;"><span class="t" style="left:9px;top:2px;"><span style="letter-spacing:-0.134px">48.06 ms (</span><span style="letter-spacing:-0.247px">0.21%)</span></span></div><span class="t" style="left:396px;top:752px;letter-spacing:-0.458px;">293</span><span class="t" style="left:512px;top:752px;letter-spacing:-0.458px;">196</span><span class="t d" style="left:541px;top:752px;letter-spacing:-0.301px;">(66.89%)</span><span class="t" style="left:23px;top:771px;letter-spacing:-0.312px;">9,340</span><span class="t d" style="left:63px;top:771px;letter-spacing:-0.461px;">(31)</span><div class="c" style="left:104px;top:768px;width:151px;height:19px;"><span class="t" style="left:4px;top:3px;"><span style="letter-spacing:-0.209px">SearchIndexer.</span><span style="letter-spacing:-0.208px">exe</span></span></div><div class="c" style="left:260px;top:770px;width:126px;height:14px;"><span class="t" style="left:9px;top:2px;"><span style="letter-spacing:-0.097px">44.8 ms (0.</span><span style="letter-spacing:-0.324px">19%)</span></span></div><span class="t" style="left:396px;top:771px;letter-spacing:-0.458px;">412</span><span class="t" style="left:512px;top:771px;letter-spacing:-0.458px;">230</span><span class="t d" style="left:541px;top:771px;letter-spacing:-0.301px;">(55.83%)</span></div></div></body></html>
